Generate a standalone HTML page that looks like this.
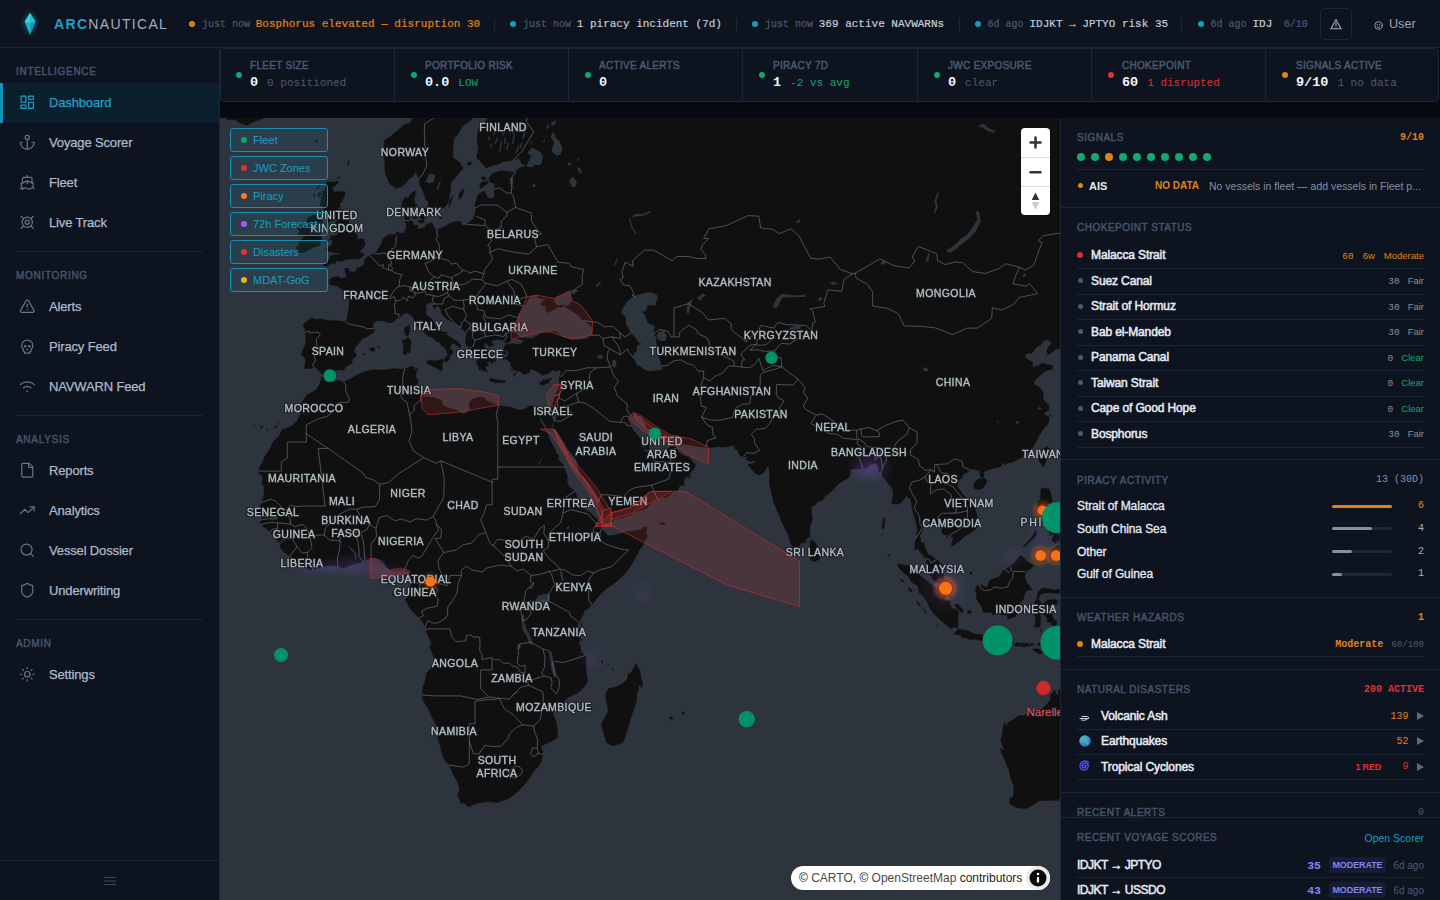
<!DOCTYPE html>
<html lang="en"><head><meta charset="utf-8"><title>ArcNautical — Dashboard</title>
<style>
*{box-sizing:border-box;margin:0;padding:0}
html,body{width:1440px;height:900px;overflow:hidden;background:#070a11;font-family:"Liberation Sans",Arial,sans-serif;color:#e2e8f0;-webkit-font-smoothing:antialiased}
.mono{font-family:"Liberation Mono","DejaVu Sans Mono",monospace}
#app{position:relative;width:1440px;height:900px;overflow:hidden}
/* top bar */
#top{position:absolute;left:0;top:0;width:1440px;height:48px;background:#0d131f;border-bottom:1px solid #1a2536}
#logo{position:absolute;left:23px;top:12px;width:14px;height:24px}
#brand{position:absolute;left:54px;top:15px;font-size:14px;letter-spacing:1.33px;color:#a0afc3;font-weight:400;line-height:18px;white-space:nowrap}
#brand b{color:#1ea2c6;font-weight:700}
#ticker{position:absolute;left:189px;top:1px;width:1122px;height:47px;overflow:hidden;white-space:nowrap;font-size:11px;line-height:47px;color:#c9d3e0}
#ticker span{position:absolute;top:0;white-space:nowrap;-webkit-text-stroke:.2px}
.tdot{position:absolute;top:20px;width:6px;height:6px;border-radius:50%}
.tsep{position:absolute;top:17px;width:1px;height:13px;background:#1c2739}
.ago{color:#4c5a70}
#bell{position:absolute;left:1320px;top:8px;width:32px;height:32px;border:1px solid #1c2739;border-radius:5px}
#bell svg{position:absolute;left:9px;top:9px}
#user{position:absolute;left:1374px;top:15px;font-size:12.6px;line-height:18px;color:#97a6ba}
/* sidebar */
#side{position:absolute;left:0;top:48px;width:220px;height:852px;background:#0d131f;border-right:1px solid #1a2536}
.sec{position:absolute;left:16px;font-size:10px;letter-spacing:.7px;color:#46546a;font-weight:400;-webkit-text-stroke:.45px #46546a;line-height:12px}
.nav{position:absolute;left:0;width:219px;height:40px;font-size:13px;letter-spacing:-.15px;color:#aebaca;line-height:40px;-webkit-text-stroke:.25px #aebaca}
.nav svg{position:absolute;left:19px;top:10.5px;width:16.5px;height:16.5px;stroke:#66758b;fill:none;stroke-width:1.75;stroke-linecap:round;stroke-linejoin:round}
.nav span{position:absolute;left:49px;top:0}
.nav.on{background:#0c1f2e;border-left:3px solid #1594b8;color:#1ea2c6;-webkit-text-stroke:.25px #1ea2c6}
.nav.on svg{left:16px;stroke:#1ea2c6}
.nav.on span{left:46px}
.hr{position:absolute;left:16px;width:187px;height:1px;background:#1a2536}
#sfoot{position:absolute;left:0;top:812px;width:219px;height:40px;border-top:1px solid #1a2536}
/* kpi strip */
#kpi{position:absolute;left:220px;top:48px;width:1219px;height:54px;background:#0d131f;border:1px solid #1a2536;border-radius:4px}
.k{position:absolute;top:0;height:52px;border-left:1px solid #1a2536}
.k i{position:absolute;left:16px;top:23px;width:6px;height:6px;border-radius:50%}
.k em{position:absolute;left:30px;top:10.5px;font-style:normal;font-size:10px;letter-spacing:.3px;color:#4c5a70;font-weight:400;-webkit-text-stroke:.45px #4c5a70;line-height:12px;white-space:nowrap}
.k b{position:absolute;left:30px;top:26px;font-size:13.5px;line-height:16px;color:#f1f5f9;white-space:nowrap}
.k b small{font-size:11px;font-weight:400;color:#4c5a70;margin-left:9px}
/* map */
#map{position:absolute;left:220px;top:118px;width:840px;height:782px;overflow:hidden;background:#2c343c}
#map>svg{position:absolute;left:0;top:0}
.lg{position:absolute;left:10px;width:98px;height:24px;border:1px solid #1690b3;border-radius:3px;background:rgba(22,150,185,.12);font-size:11px;line-height:22px;color:#1d9cc0}
.lg i{position:absolute;left:10px;top:8px;width:6px;height:6px;border-radius:50%}
.lg span{position:absolute;left:22px;top:0}
#ctrl{position:absolute;left:801px;top:10px;width:29px;height:87px;background:#fff;border-radius:4px;box-shadow:0 0 0 2px rgba(0,0,0,.1)}
#ctrl div{position:absolute;left:0;width:29px;height:29px}
#attr{position:absolute;left:571px;top:748px;width:259px;height:24px;border-radius:12px;background:#fff;font-size:12px;line-height:24px;color:#222}
/* right panel */
#panel{position:absolute;left:1060px;top:118px;width:380px;height:782px;background:#0d131f;border-left:1px solid #1a2536;overflow:hidden}
.ps{position:absolute;left:0;width:379px;border-bottom:1px solid #1a2536}
.ph{position:absolute;left:16px;font-size:10px;letter-spacing:.5px;color:#46546a;font-weight:400;-webkit-text-stroke:.45px #46546a;line-height:12px;white-space:nowrap}
.pr{position:absolute;right:16px;font-size:10px;line-height:12px;white-space:nowrap}
.row{position:absolute;left:16px;width:347px;border-bottom:1px solid #1a2536}
.row .d{position:absolute;left:1px;width:6px;height:6px;border-radius:50%}
.row .n{position:absolute;left:14px;font-size:12px;color:#e6ebf2;font-weight:700;white-space:nowrap;letter-spacing:-.2px}
.row .r{position:absolute;right:0;font-size:10px;white-space:nowrap}
</style></head><body><div id="app">
<div id="top">
<svg id="logo" viewBox="0 0 14 24" style="overflow:visible;filter:drop-shadow(0 0 3px rgba(34,200,230,.55))"><path d="M7.1 1L12.400 9.500L7.100 22.600L1.750 9.500Z" fill="#1fb4cc"/><path d="M7.100 1L7.100 11.200L1.750 9.500Z" fill="#3ad3e2"/><path d="M7.100 1L12.400 9.500L7.100 11.200Z" fill="#25bdd3"/><path d="M1.750 9.500L7.100 11.200L7.100 22.600Z" fill="#22b6cf"/><path d="M12.400 9.500L7.100 11.200L7.100 22.600Z" fill="#1796b6"/></svg>
<div id="brand"><b>ARC</b>NAUTICAL</div>
<div id="ticker" class="mono">
<i class="tdot" style="left:-0.25px;background:#e0831a"></i>
<span class="ago" style="left:13px;font-size:10px">just now</span>
<span style="left:66.75px;color:#e0831a">Bosphorus elevated — disruption 30</span>
<i class="tdot" style="left:321px;background:#1a9cc2"></i>
<span class="ago" style="left:334px;font-size:10px">just now</span>
<span style="left:387.75px;color:#c3cedb">1 piracy incident (7d)</span>
<i class="tdot" style="left:563px;background:#1a9cc2"></i>
<span class="ago" style="left:576px;font-size:10px">just now</span>
<span style="left:629.75px;color:#c3cedb">369 active NAVWARNs</span>
<i class="tdot" style="left:786px;background:#1a9cc2"></i>
<span class="ago" style="left:798.5px;font-size:10px">6d ago</span>
<span style="left:840.5px;color:#c3cedb">IDJKT → JPTYO risk 35</span>
<i class="tdot" style="left:1009px;background:#1a9cc2"></i>
<span class="ago" style="left:1021.5px;font-size:10px">6d ago</span>
<span style="left:1063.5px;color:#c3cedb">IDJ</span>
<i class="tsep" style="left:304.75px"></i>
<i class="tsep" style="left:547.25px"></i>
<i class="tsep" style="left:769.5px"></i>
<i class="tsep" style="left:992.25px"></i>
<span class="ago" style="left:1094.75px;font-size:10px">6/10</span>
</div>
<div id="bell"><svg width="12" height="12" viewBox="0 0 24 24" fill="none" stroke="#9aa8bc" stroke-width="2.300" stroke-linejoin="miter"><path d="M12 3.500L22 21.500H2Z"/><path d="M12 10v5.500" stroke-width="2.600"/><path d="M12 17.500v1.800" stroke-width="2.600"/></svg></div>
<div id="user"><svg width="9" height="9" viewBox="0 0 24 24" fill="none" stroke="#97a6ba" stroke-width="2.6" stroke-linecap="round" style="position:absolute;left:0;top:6px"><circle cx="12" cy="12" r="10"/><path d="M8 15s1.5 2 4 2 4-2 4-2"/><path d="M9 9v1M15 9v1"/></svg><span style="position:absolute;left:15px;top:0">User</span></div>
</div>
<div id="side">
<div class="sec" style="top:17.5px">INTELLIGENCE</div>
<div class="nav on" style="top:35px"><svg viewBox="0 0 24 24"><rect width="7" height="9" x="3" y="3" rx=".4"/><rect width="7" height="5" x="14" y="3" rx=".4"/><rect width="7" height="9" x="14" y="12" rx=".4"/><rect width="7" height="5" x="3" y="16" rx=".4"/></svg><span>Dashboard</span></div>
<div class="nav" style="top:75px"><svg viewBox="0 0 24 24"><path d="M12 22V8"/><path d="M5 12H2a10 10 0 0 0 20 0h-3"/><circle cx="12" cy="5" r="3"/></svg><span>Voyage Scorer</span></div>
<div class="nav" style="top:115px"><svg viewBox="0 0 24 24"><path d="M2 21c.6.5 1.2 1 2.5 1 2.5 0 2.5-2 5-2 1.3 0 1.9.5 2.5 1 .6.5 1.2 1 2.5 1 2.5 0 2.5-2 5-2 1.3 0 1.9.5 2.5 1"/><path d="M19.38 20A11.6 11.6 0 0 0 21 14l-9-4-9 4c0 2.9.94 5.34 2.81 7.76"/><path d="M19 13V7a2 2 0 0 0-2-2H7a2 2 0 0 0-2 2v6"/><path d="M12 10v4"/><path d="M12 2v3"/></svg><span>Fleet</span></div>
<div class="nav" style="top:155px"><svg viewBox="0 0 24 24"><circle cx="12" cy="12" r="7.5"/><circle cx="12" cy="12" r="3"/><path d="M3 3l3.6 3.6M21 3l-3.6 3.6M3 21l3.6-3.6M21 21l-3.6-3.6"/></svg><span>Live Track</span></div>
<div class="hr" style="top:203px"></div>
<div class="sec" style="top:221.5px">MONITORING</div>
<div class="nav" style="top:239px"><svg viewBox="0 0 24 24"><path d="m21.73 18-8-14a2 2 0 0 0-3.48 0l-8 14A2 2 0 0 0 4 21h16a2 2 0 0 0 1.73-3"/><path d="M12 9v4"/><path d="M12 17h.01"/></svg><span>Alerts</span></div>
<div class="nav" style="top:279px"><svg viewBox="0 0 24 24"><circle cx="9" cy="12" r="1"/><circle cx="15" cy="12" r="1"/><path d="M8 20v2h8v-2"/><path d="m12.5 17-.5-1-.5 1h1z"/><path d="M16 20a2 2 0 0 0 1.56-3.25 8 8 0 1 0-11.12 0A2 2 0 0 0 8 20"/></svg><span>Piracy Feed</span></div>
<div class="nav" style="top:319px"><svg viewBox="0 0 24 24"><path d="M12 19.500h.01" stroke-width="2.600"/><path d="M2 9.500a15 15 0 0 1 20 0"/><path d="M6.500 14.500a8 8 0 0 1 11 0"/></svg><span>NAVWARN Feed</span></div>
<div class="hr" style="top:367px"></div>
<div class="sec" style="top:385.5px">ANALYSIS</div>
<div class="nav" style="top:403px"><svg viewBox="0 0 24 24"><path d="M6 22a2 2 0 0 1-2-2V4a2 2 0 0 1 2-2h8a2.4 2.4 0 0 1 1.704.706l3.588 3.588A2.4 2.4 0 0 1 20 8v12a2 2 0 0 1-2 2z"/><path d="M14 2v5a1 1 0 0 0 1 1h5"/></svg><span>Reports</span></div>
<div class="nav" style="top:443px"><svg viewBox="0 0 24 24"><path d="M16 7h6v6"/><path d="m22 7-8.5 8.5-5-5L2 17"/></svg><span>Analytics</span></div>
<div class="nav" style="top:483px"><svg viewBox="0 0 24 24"><path d="m21 21-4.34-4.34"/><circle cx="11" cy="11" r="8"/></svg><span>Vessel Dossier</span></div>
<div class="nav" style="top:523px"><svg viewBox="0 0 24 24"><path d="M20 13c0 5-3.5 7.5-7.66 8.95a1 1 0 0 1-.67-.01C7.5 20.5 4 18 4 13V6a1 1 0 0 1 1-1c2 0 4.5-1.2 6.24-2.72a1.17 1.17 0 0 1 1.52 0C14.51 3.81 17 5 19 5a1 1 0 0 1 1 1z"/></svg><span>Underwriting</span></div>
<div class="hr" style="top:571px"></div>
<div class="sec" style="top:589.5px">ADMIN</div>
<div class="nav" style="top:607px"><svg viewBox="0 0 24 24"><circle cx="12" cy="12" r="4"/><path d="M12 2v2"/><path d="M12 20v2"/><path d="m4.93 4.93 1.41 1.41"/><path d="m17.66 17.66 1.41 1.41"/><path d="M2 12h2"/><path d="M20 12h2"/><path d="m6.34 17.66-1.41 1.41"/><path d="m19.07 4.93-1.41 1.41"/></svg><span>Settings</span></div>
<div id="sfoot"><svg width="14" height="14" viewBox="0 0 24 24" fill="none" stroke="#3c4a60" stroke-width="2" stroke-linecap="round" style="position:absolute;left:103px;top:13px"><path d="M3 6h18M3 12h18M3 18h18"/></svg></div>
</div>
<div id="kpi">
<div class="k" style="left:-1px;width:174px;border-left:none;"><i style="background:#10a870"></i><em>FLEET SIZE</em><b class="mono">0<small style="color:#4c5a70">0 positioned</small></b></div>
<div class="k" style="left:173px;width:174px;"><i style="background:#10a870"></i><em>PORTFOLIO RISK</em><b class="mono">0.0<small style="color:#10a870">LOW</small></b></div>
<div class="k" style="left:347px;width:174px;"><i style="background:#10a870"></i><em>ACTIVE ALERTS</em><b class="mono">0</b></div>
<div class="k" style="left:521px;width:175px;"><i style="background:#10a870"></i><em>PIRACY 7D</em><b class="mono">1<small style="color:#10a870">-2 vs avg</small></b></div>
<div class="k" style="left:696px;width:174px;"><i style="background:#10a870"></i><em>JWC EXPOSURE</em><b class="mono">0<small style="color:#4c5a70">clear</small></b></div>
<div class="k" style="left:870px;width:174px;"><i style="background:#e03030"></i><em>CHOKEPOINT</em><b class="mono">60<small style="color:#e03030">1 disrupted</small></b></div>
<div class="k" style="left:1044px;width:174px;"><i style="background:#e0831a"></i><em>SIGNALS ACTIVE</em><b class="mono">9/10<small style="color:#4c5a70">1 no data</small></b></div>
</div>
<div id="map"><svg width="840" height="782" viewBox="0 0 840 782">
<defs><radialGradient id="gp"><stop offset="0" stop-color="#8b5cf6" stop-opacity=".3"/><stop offset="1" stop-color="#8b5cf6" stop-opacity="0"/></radialGradient><radialGradient id="go"><stop offset="0" stop-color="#ff7a1e" stop-opacity=".9"/><stop offset=".32" stop-color="#e24a1c" stop-opacity=".6"/><stop offset=".5" stop-color="#a8382c" stop-opacity=".32"/><stop offset=".75" stop-color="#6a3a6a" stop-opacity=".12"/><stop offset="1" stop-color="#6a3a8a" stop-opacity="0"/></radialGradient><filter id="bl" x="-20%" y="-20%" width="140%" height="140%"><feGaussianBlur stdDeviation=".6"/></filter><filter id="bl2" x="-30%" y="-30%" width="160%" height="160%"><feGaussianBlur stdDeviation="1.6"/></filter><filter id="nf" x="0" y="0" width="100%" height="100%" filterUnits="userSpaceOnUse"><feOffset dx="0" dy="0"/></filter></defs>
<rect width="840" height="782" fill="#2d343d"/>
<g fill="#101010" stroke="#101010" stroke-width=".4" stroke-linejoin="round">
<path d="M102.0,259.0 105.4,258.3 108.8,262.5 113.4,263.1 119.1,262.5 124.2,263.8 132.1,259.7 136.1,257.6 143.0,254.0 152.6,251.9 164.6,251.9 174.8,250.5 179.9,251.2 184.5,250.8 191.9,248.3 194.2,249.0 193.6,251.9 198.1,249.8 195.9,254.7 195.9,259.0 198.7,263.1 197.0,266.6 193.0,269.4 193.0,272.1 196.4,273.5 198.7,276.2 204.4,278.9 210.7,278.9 216.3,280.3 221.5,282.3 223.2,287.7 230.0,290.4 236.8,292.3 243.6,296.3 249.9,292.3 249.3,284.3 252.8,281.0 259.0,278.9 264.1,279.6 267.5,283.0 272.1,285.0 278.9,287.7 290.3,289.0 300.0,292.3 305.7,290.4 308.5,288.4 312.5,287.7 316.5,288.4 319.3,289.7 320.7,298.6 319.6,300.9 321.6,305.5 323.9,309.0 326.4,312.3 327.8,316.1 328.7,319.3 330.7,323.4 334.1,329.7 337.5,336.9 339.2,337.2 338.1,341.6 344.1,347.8 345.5,353.9 347.2,357.5 347.2,363.6 348.6,368.1 352.3,371.4 355.2,373.2 358.0,381.5 360.0,387.5 362.0,390.4 365.4,391.6 369.9,393.9 374.5,398.6 378.8,402.7 381.9,405.6 381.9,408.8 378.5,411.2 381.0,410.9 383.0,412.3 387.6,417.5 391.6,417.5 400.1,415.8 405.8,413.8 409.8,413.2 415.5,412.6 420.6,411.5 424.3,408.8 427.3,409.5 426.3,413.5 426.5,417.0 428.0,417.5 425.1,423.0 422.3,428.2 419.2,432.0 416.0,438.6 411.5,446.9 405.8,454.6 399.0,461.4 393.6,465.7 385.9,471.1 377.6,479.3 372.2,486.7 368.2,490.4 364.3,492.7 363.7,495.5 361.1,500.4 358.0,506.1 356.3,512.1 356.9,514.1 359.1,516.1 360.3,521.3 359.1,524.7 360.3,528.5 361.4,534.5 364.3,536.2 366.0,538.6 365.7,542.6 366.2,551.6 366.5,557.8 367.7,561.3 367.4,563.9 363.7,569.6 358.0,574.9 352.6,577.0 346.0,580.9 342.9,585.1 338.1,589.9 333.8,592.6 332.7,596.5 335.2,600.8 336.4,605.7 337.5,611.8 337.5,617.1 336.9,619.9 332.4,622.7 325.0,626.2 321.6,627.8 321.0,630.3 322.7,632.5 322.7,636.0 321.3,643.4 318.2,648.5 312.2,655.4 308.8,661.3 303.7,667.3 297.7,673.7 294.3,676.4 288.6,680.5 281.5,682.9 276.9,684.6 268.7,683.6 261.6,684.6 255.0,686.0 249.3,688.9 245.1,686.0 242.8,684.6 240.6,685.7 240.2,682.5 237.4,676.4 239.1,673.7 239.7,670.3 237.1,663.0 232.8,655.7 231.4,651.5 229.1,647.2 224.9,642.1 221.7,634.7 220.0,627.4 218.0,619.9 218.0,611.5 218.0,610.0 214.9,604.5 211.8,599.0 207.8,589.9 202.7,582.1 202.4,577.0 202.7,571.9 203.0,568.4 204.7,564.8 206.7,554.9 211.8,549.6 213.8,544.9 214.4,541.5 213.8,538.8 211.2,532.2 209.5,528.7 211.8,525.3 210.1,522.1 208.7,518.7 205.8,512.4 205.0,509.0 203.0,504.7 198.7,499.5 196.1,496.7 190.2,491.0 187.9,486.4 185.3,481.3 188.5,479.0 189.3,475.1 190.2,471.6 191.0,466.8 191.9,460.5 190.2,456.8 189.6,454.6 186.2,452.3 182.8,451.4 176.2,452.3 170.3,452.8 166.3,448.3 164.3,444.8 161.2,441.4 154.9,440.6 149.2,441.1 142.4,442.3 141.2,444.3 134.4,445.7 128.4,448.3 123.6,450.3 118.5,448.3 112.8,447.4 106.0,448.0 100.9,449.1 95.2,451.1 91.8,452.6 88.3,451.1 84.1,448.8 78.4,443.7 74.1,441.4 70.1,438.0 64.4,434.5 62.2,432.2 60.2,428.8 59.9,425.3 57.6,423.0 52.5,417.3 50.2,414.4 46.8,410.9 42.3,407.4 40.3,405.9 40.6,401.6 41.1,400.1 40.3,397.2 38.3,394.5 36.0,392.8 38.3,391.3 41.7,385.1 43.4,379.2 44.5,372.6 43.4,367.8 41.7,364.8 43.1,360.0 39.4,354.5 38.6,356.3 39.1,350.2 42.8,343.4 44.8,338.5 50.2,330.4 53.1,323.4 58.8,318.3 62.2,311.6 70.7,308.7 77.5,302.2 80.7,295.7 79.2,294.0 79.8,288.4 82.9,283.0 87.2,276.6 92.3,274.2 96.6,271.4 99.7,265.9 100.6,263.1 101.7,259.0Z M105.1,256.5 110.5,252.6 115.6,252.6 121.6,251.5 123.6,252.3 126.5,248.3 131.6,245.8 132.7,240.8 136.7,237.9 133.9,232.7 135.6,228.7 140.4,223.4 142.7,220.4 148.1,218.2 153.8,214.3 154.3,211.3 152.9,208.2 153.2,205.1 156.6,202.7 161.7,202.7 166.0,203.5 169.4,205.1 173.4,203.9 177.1,200.4 179.9,199.6 183.9,195.6 186.5,194.8 191.6,197.6 194.2,201.6 195.3,206.3 199.0,210.5 202.7,212.8 205.2,215.5 207.2,217.8 212.6,219.7 215.2,222.3 217.2,224.2 219.5,223.8 220.9,226.8 222.6,228.7 224.9,228.7 226.6,233.5 227.7,236.8 225.7,239.0 224.6,241.9 224.9,243.7 227.2,243.7 229.7,240.4 230.0,237.5 233.1,235.3 232.8,233.1 229.4,230.5 231.7,225.7 234.0,225.3 238.0,228.3 240.0,230.1 240.8,227.5 238.0,223.8 231.4,220.0 226.0,216.6 227.7,214.3 222.6,214.3 219.2,212.0 216.3,210.1 214.4,205.1 212.4,201.2 207.0,197.6 205.5,194.5 206.7,190.4 205.2,187.6 210.1,184.4 213.8,184.8 212.9,188.4 214.4,191.3 216.9,187.6 220.3,190.0 222.0,196.4 226.0,200.4 229.1,202.0 234.5,205.5 238.5,208.6 241.1,210.5 244.2,212.8 245.9,214.7 246.2,218.9 245.4,224.2 246.2,226.4 249.3,229.8 250.8,232.4 253.6,236.4 255.6,240.4 257.3,240.8 258.7,241.1 255.9,243.7 256.7,245.8 258.7,248.7 259.0,251.9 260.4,251.9 261.3,250.5 263.0,254.0 263.8,252.3 265.3,253.3 267.5,254.4 266.7,251.9 265.8,249.4 265.3,246.5 267.3,248.3 269.2,247.3 267.5,245.5 266.4,244.0 269.5,243.3 270.1,244.0 272.4,245.8 272.4,242.6 275.2,243.7 275.5,242.2 273.2,238.6 268.7,236.0 265.8,236.0 266.4,233.5 268.1,234.6 267.5,232.7 264.7,229.4 264.1,226.8 265.8,224.2 268.1,226.8 268.7,229.0 270.4,227.5 271.8,229.0 272.1,226.4 274.1,227.5 271.0,223.8 274.4,221.9 278.4,221.6 282.9,222.3 283.8,224.2 287.7,224.2 284.6,228.3 284.3,229.0 283.8,232.4 287.5,232.4 288.3,235.7 287.7,238.6 289.7,240.0 285.7,238.6 285.2,241.1 288.0,242.6 290.6,244.4 290.6,248.0 292.6,249.0 290.9,250.5 294.8,250.5 291.4,252.6 296.3,251.9 295.4,253.3 301.1,253.0 301.4,255.1 304.2,256.1 307.1,255.4 309.1,255.1 310.2,251.5 313.6,251.9 317.6,253.7 322.4,257.2 328.7,255.4 332.4,251.9 336.4,253.3 339.2,252.3 341.2,253.3 340.1,257.2 338.9,261.1 339.8,265.2 339.2,268.3 337.5,272.1 335.8,276.6 334.7,279.6 333.2,284.7 331.3,288.4 327.8,290.7 323.9,291.3 319.3,290.0 320.7,298.6 321.6,300.9 323.9,304.5 326.7,309.7 330.4,312.9 331.3,311.3 331.8,308.1 332.7,304.8 334.4,301.2 333.8,304.8 333.2,308.7 332.4,311.3 335.8,311.3 338.7,315.5 342.9,322.5 347.2,330.1 352.0,336.0 354.6,339.1 357.4,344.1 358.3,352.0 360.8,357.5 364.8,360.3 369.1,366.3 372.2,372.0 376.2,376.8 377.6,379.8 379.0,383.3 378.5,386.9 379.9,392.2 381.6,401.0 382.7,404.8 387.0,405.1 391.6,403.9 395.5,400.7 401.8,400.1 409.8,396.9 415.2,393.7 421.1,391.9 427.1,389.8 432.5,383.9 437.6,381.2 443.3,379.2 446.7,379.5 450.2,376.5 452.4,373.8 457.0,373.2 459.8,367.8 464.4,367.2 463.8,363.3 464.7,359.4 468.4,358.7 470.6,354.5 473.5,352.0 475.8,345.9 474.0,345.3 468.9,339.1 464.4,337.9 458.4,334.1 456.1,329.4 455.8,326.6 456.7,321.8 454.7,323.4 453.9,325.3 450.2,328.8 445.0,333.8 440.5,336.0 434.8,335.4 430.2,336.6 427.4,334.7 427.1,332.9 429.1,330.4 429.1,324.7 427.1,323.1 424.8,326.6 424.6,331.6 422.8,328.5 420.9,326.0 421.1,321.2 418.0,317.7 415.5,314.5 413.2,312.6 411.5,308.7 409.2,304.2 408.6,302.5 406.9,302.2 409.2,300.9 408.6,298.3 411.8,298.6 414.0,296.0 415.5,295.3 417.7,298.0 420.9,298.0 424.8,305.1 427.4,311.6 431.7,312.3 434.8,314.8 439.3,318.0 445.0,320.3 447.9,320.6 451.9,319.0 455.8,316.7 459.3,317.4 460.4,322.2 461.5,325.3 464.4,326.3 470.1,326.9 474.6,327.9 480.6,328.5 485.4,329.7 490.0,329.7 496.8,328.8 503.3,329.1 508.8,328.2 513.9,327.2 515.0,331.3 517.9,332.2 519.6,337.2 523.5,339.1 527.0,337.9 525.8,341.3 530.1,343.7 534.9,342.8 535.5,344.7 532.1,345.6 528.7,346.2 527.8,347.4 531.5,351.1 535.8,355.7 539.5,356.9 543.7,354.5 546.3,350.5 548.3,347.1 549.1,351.1 549.4,354.5 550.0,358.7 549.4,366.0 550.3,369.6 552.6,379.2 553.7,385.1 555.4,388.1 557.1,392.2 559.4,398.1 561.4,403.3 564.2,409.4 566.5,412.9 569.3,420.4 571.3,426.5 573.3,429.1 576.7,431.2 580.1,427.1 580.4,425.3 585.0,424.2 586.7,424.2 584.7,422.5 589.8,418.4 589.8,415.5 589.8,408.8 592.4,402.1 591.5,393.9 591.2,389.2 595.8,386.3 597.2,384.2 603.8,381.5 603.5,379.5 609.4,375.0 614.0,371.1 618.5,365.7 624.0,362.4 628.8,359.4 630.5,355.1 630.5,352.0 633.3,351.1 636.8,350.8 641.9,350.8 647.6,349.6 650.4,346.5 652.1,346.5 655.0,344.7 657.8,347.1 658.9,352.7 660.6,356.3 664.1,360.3 667.8,364.8 672.3,370.5 673.4,375.6 671.5,385.1 676.0,386.6 680.6,385.1 683.4,381.8 686.8,377.4 688.5,379.8 690.8,382.1 691.9,389.5 693.6,396.6 696.5,405.9 697.3,410.9 696.2,420.2 694.8,426.8 694.8,432.5 696.5,430.8 698.2,431.4 701.6,435.7 704.7,440.0 706.4,442.6 706.4,446.6 707.9,453.4 709.0,456.3 711.6,458.3 712.1,460.8 714.7,463.1 717.2,464.8 720.9,467.1 724.4,470.1 727.2,469.6 728.9,469.1 726.4,463.4 724.1,460.8 723.5,455.7 724.1,451.7 722.4,446.9 717.2,442.0 714.7,440.6 711.6,438.0 707.9,436.3 706.2,431.7 704.4,428.8 704.2,424.8 700.8,424.8 699.9,417.3 702.2,413.2 703.3,409.7 704.2,405.4 704.7,402.4 706.2,399.8 709.9,400.1 709.3,403.3 709.6,404.8 711.8,404.8 716.1,405.9 719.2,408.0 721.2,411.2 722.1,414.9 724.4,416.7 728.3,417.0 730.0,417.8 733.5,420.2 731.8,424.2 731.5,428.2 734.6,427.1 737.2,424.5 740.3,422.5 742.6,420.2 744.8,418.1 750.5,414.9 755.6,411.2 756.8,409.1 756.8,407.1 758.2,403.3 757.1,398.3 755.6,393.4 755.1,390.4 751.4,384.5 748.5,381.8 744.8,378.6 742.3,376.2 740.9,373.2 737.2,369.0 738.0,362.7 742.0,359.7 743.1,356.3 746.5,355.1 750.0,352.0 753.4,350.8 756.2,352.3 759.6,352.3 759.6,355.7 760.8,359.4 763.6,359.4 763.9,353.9 767.0,352.3 772.4,350.5 777.3,349.6 781.5,348.1 781.8,344.4 785.2,347.1 788.1,344.7 791.8,344.4 799.5,340.7 803.4,337.9 807.4,333.8 810.8,331.0 813.7,328.5 816.0,324.1 817.9,319.6 820.5,315.8 823.1,311.6 827.3,306.8 829.0,303.5 829.0,298.9 825.6,297.0 823.3,296.3 825.6,294.0 829.0,292.3 829.0,287.0 826.2,285.0 823.3,281.0 823.3,275.5 819.9,269.4 814.2,266.3 814.0,263.8 815.7,261.8 819.4,257.9 820.5,257.2 823.1,254.4 827.3,252.3 832.7,251.2 832.7,248.0 830.7,246.9 826.2,246.5 822.5,244.7 817.7,248.0 813.7,249.0 812.0,246.9 813.1,244.7 809.7,242.6 805.4,239.7 805.4,236.4 808.6,235.3 812.0,234.9 816.0,229.4 820.5,227.2 823.1,223.4 825.6,221.9 829.0,221.9 831.3,224.9 829.0,228.3 826.8,232.4 827.6,236.8 825.1,237.9 830.7,235.3 835.3,231.6 842.7,229.4 852.4,228.7 886.5,205.9 932.0,147.9 932.0,-162.3 203.8,-162.3 203.8,-27.4 198.1,-7.0 195.9,-4.4 190.2,4.7 183.3,7.2 179.4,11.0 174.8,14.8 170.3,18.5 164.6,22.2 164.0,29.4 163.4,35.3 164.6,43.5 165.1,54.8 167.4,60.4 169.7,65.8 175.7,70.2 181.1,69.1 185.6,65.3 189.6,60.4 192.4,59.3 195.3,54.8 195.9,49.2 196.4,56.0 199.3,60.4 199.8,66.9 203.3,73.4 205.5,80.8 208.4,84.4 207.8,90.6 209.5,95.1 210.4,97.6 214.1,97.1 217.2,95.6 217.5,91.1 224.3,89.5 228.6,84.4 230.3,72.8 231.1,63.7 232.8,62.6 238.5,56.0 243.1,50.3 239.7,44.6 233.4,40.0 232.8,33.0 233.1,28.2 234.3,19.7 237.7,16.6 242.2,8.5 251.0,2.1 256.2,-9.7 261.9,-21.9 272.7,-24.6 280.1,-13.7 274.9,-9.7 267.0,1.5 262.4,8.5 258.4,11.0 257.0,21.5 258.4,30.6 257.3,35.3 256.7,40.0 260.7,43.5 266.1,50.3 269.2,48.6 277.5,46.4 283.5,43.5 288.6,42.9 294.8,41.8 298.8,40.0 301.7,45.8 307.4,48.6 300.5,49.2 294.8,54.3 286.3,53.2 281.2,52.6 276.4,54.3 272.4,55.4 269.2,59.8 269.5,63.7 274.9,65.8 274.1,71.8 274.4,78.1 272.7,80.8 268.1,80.2 264.1,72.8 258.2,76.6 255.0,85.9 255.6,94.1 252.8,101.6 248.8,104.6 246.5,107.0 241.7,107.5 240.8,103.6 235.4,103.6 229.4,105.5 224.0,109.0 216.6,111.9 214.1,109.5 211.8,104.6 206.7,106.5 204.4,109.5 197.6,111.4 197.6,107.5 193.3,107.0 192.2,103.1 189.3,103.1 189.6,96.1 193.6,89.5 197.6,87.0 194.2,84.9 194.2,80.8 195.6,76.0 195.9,72.8 192.2,74.4 188.5,79.2 184.5,79.7 182.2,83.9 181.6,91.1 182.2,95.6 184.8,98.1 184.5,102.1 186.2,106.0 186.2,110.9 185.1,112.4 184.2,115.2 181.6,115.2 176.5,113.8 175.4,117.1 170.8,116.2 166.3,118.1 162.6,120.9 161.4,125.6 158.9,129.8 155.5,134.9 152.1,136.7 148.9,138.5 146.1,139.4 144.7,141.7 144.4,146.1 141.8,148.3 136.7,150.5 136.1,152.7 133.9,154.0 129.3,153.6 128.4,150.5 124.5,150.5 126.5,158.0 127.0,159.7 124.2,159.7 120.2,160.5 118.5,158.4 112.8,159.3 108.5,162.3 111.1,163.5 108.8,164.8 110.8,166.9 116.5,167.8 121.3,171.2 123.0,171.6 125.3,177.8 129.0,180.7 129.3,185.6 128.4,192.9 126.7,202.0 124.2,203.5 118.5,203.1 113.9,202.4 108.8,202.7 103.4,201.6 102.3,200.8 95.5,201.6 91.8,199.6 87.8,202.7 82.9,206.6 85.2,212.0 85.2,215.9 86.1,220.0 85.8,223.8 84.9,227.5 82.1,233.5 81.5,237.5 83.2,238.2 84.9,239.7 85.5,243.3 84.4,250.5 90.6,250.5 96.0,249.0 99.7,254.0 103.7,257.6Z M103.1,147.5 106.0,148.3 112.0,144.8 114.8,146.1 116.2,142.6 121.6,143.5 124.8,141.7 129.3,141.2 134.7,140.8 137.0,141.2 141.0,139.9 143.2,137.6 143.5,135.3 139.5,134.4 140.7,132.1 143.2,130.3 145.5,125.2 143.0,120.9 138.4,120.9 136.7,121.9 137.6,119.0 136.1,114.8 134.4,109.9 132.1,106.0 128.7,104.1 127.6,101.1 126.5,96.1 124.2,93.6 121.3,91.1 117.4,91.1 120.8,88.0 119.1,86.5 121.6,83.9 123.9,79.2 125.3,75.5 124.2,73.4 116.8,73.4 111.7,75.5 113.9,71.8 111.7,70.2 117.9,65.3 118.2,63.1 115.6,63.7 110.5,64.2 107.1,63.7 105.1,71.2 102.6,73.4 103.1,77.6 99.7,75.5 99.2,79.7 102.3,80.8 100.3,83.4 103.7,85.9 100.3,87.5 104.3,89.0 103.7,92.1 102.8,98.1 105.4,96.1 107.1,92.1 108.3,91.6 109.1,96.6 106.5,102.6 108.0,104.6 110.8,103.1 115.6,101.6 117.9,101.6 115.1,106.0 117.4,109.9 119.3,109.9 118.2,112.8 118.2,116.2 115.6,117.6 111.7,118.1 109.4,117.6 111.1,119.5 108.5,122.4 112.2,121.4 112.2,126.1 108.8,128.9 105.4,130.7 106.5,132.6 111.7,134.0 114.5,134.9 117.6,134.9 120.2,133.5 118.5,136.7 112.2,137.1 110.0,139.0 109.7,140.8 106.5,144.3 104.3,146.1Z M93.5,97.1 100.6,99.1 103.1,104.6 104.3,107.5 99.7,110.9 100.9,117.1 101.4,120.9 99.4,128.0 95.7,128.4 88.9,131.7 84.9,134.0 79.8,134.9 77.5,133.5 76.4,130.7 76.1,128.9 79.5,127.0 79.0,124.7 82.1,120.9 84.4,119.0 80.9,117.6 77.5,116.7 79.8,112.8 77.5,110.9 78.7,108.0 83.2,108.0 86.9,108.0 88.9,105.1 85.8,104.6 88.3,99.6Z M-3.8,-20.5 10.4,-4.4 6.4,2.1 15.0,1.5 20.1,5.3 27.5,7.2 34.3,3.4 43.4,0.2 50.2,-4.4 53.1,-8.4 58.2,-13.7 55.9,-27.4 -1.0,-34.5Z M415.9,545.8 418.9,550.8 420.0,554.0 420.9,559.2 422.8,565.4 421.4,569.3 418.3,566.3 418.6,570.4 416.6,576.7 416.6,582.4 413.2,592.9 410.6,601.1 407.8,610.6 405.2,618.7 402.9,624.6 399.0,625.9 392.4,628.1 386.4,624.3 383.9,615.6 381.6,607.5 382.2,604.1 385.3,599.0 388.1,593.5 387.6,587.5 385.9,581.8 385.9,575.5 388.4,570.7 393.3,569.6 399.0,567.8 403.5,564.8 407.2,561.6 408.1,556.0 411.5,554.6 413.2,551.3Z M591.2,421.2 595.2,424.5 597.5,428.5 600.3,433.4 601.2,438.3 598.6,441.7 594.1,443.6 591.2,442.6 589.8,437.7 589.2,431.7 590.4,426.2 590.4,422.5Z M677.7,445.7 683.4,447.1 688.2,447.7 693.1,451.7 697.1,455.7 703.6,460.3 706.7,463.1 709.0,464.8 712.7,467.7 717.0,470.5 722.1,474.5 726.1,477.3 724.4,481.9 729.5,483.3 730.6,488.1 732.3,490.4 736.3,491.0 738.9,494.4 737.7,498.4 738.0,503.5 737.7,510.4 734.6,508.7 730.6,510.7 726.9,507.0 720.9,502.4 717.2,499.0 710.7,491.8 706.4,482.7 703.0,477.9 699.3,475.1 697.6,467.4 691.9,464.5 688.5,458.8 682.3,453.7 678.3,448.8Z M734.0,515.8 738.6,511.0 743.1,512.1 748.3,512.7 753.1,515.5 756.5,516.4 763.6,517.0 765.0,514.1 767.3,514.1 769.0,515.5 773.0,516.7 777.0,518.1 777.8,516.7 783.5,516.7 784.7,517.5 778.4,518.7 777.8,520.7 779.5,521.6 784.1,521.3 786.4,521.8 786.4,524.1 786.9,527.3 782.4,525.9 776.7,525.3 769.9,524.7 763.0,523.0 755.6,521.3 750.0,521.6 745.4,520.1 740.9,519.3 741.4,517.3 735.7,516.4Z M786.7,523.9 790.9,523.3 793.8,525.3 790.9,527.6 787.5,525.3Z M794.6,527.0 795.8,525.0 799.5,524.7 798.9,528.2 794.9,527.9Z M799.7,525.3 804.6,525.3 808.0,525.0 808.6,527.0 812.5,524.7 813.7,526.7 809.1,528.2 802.3,529.0 800.0,528.2Z M817.4,525.6 822.8,524.7 829.6,525.6 834.7,524.1 835.3,525.3 830.7,527.3 825.6,528.2 818.2,527.6Z M812.5,531.3 817.9,530.5 822.8,534.2 819.9,536.2 814.8,533.4Z M838.1,536.5 841.6,531.0 847.2,526.7 858.0,525.0 859.8,525.6 855.2,528.7 846.7,533.9 841.0,536.2Z M759.3,465.7 763.3,467.9 767.0,469.4 768.2,465.4 769.9,462.5 773.3,460.8 778.7,459.1 783.8,452.3 789.2,448.8 792.1,446.9 795.8,443.4 799.7,438.0 802.3,438.0 804.6,440.8 807.4,444.0 814.0,447.7 810.3,451.1 806.3,453.1 804.6,458.5 806.8,464.8 812.3,471.6 806.3,472.8 804.3,476.8 803.7,480.7 800.3,484.4 798.3,489.8 797.2,494.4 795.5,498.4 787.8,501.0 787.2,496.7 782.4,497.0 778.4,495.5 772.7,496.7 771.9,494.4 767.0,494.4 763.0,494.1 761.3,487.9 756.5,481.3 756.8,477.3 755.4,472.2 755.6,469.6Z M814.8,509.0 815.4,503.5 816.0,500.1 812.0,492.7 814.2,484.7 816.8,481.0 817.4,476.8 818.8,473.1 822.8,469.9 829.6,471.1 835.3,471.9 842.7,470.8 845.8,467.7 847.8,469.4 843.3,474.8 837.0,475.3 829.6,474.8 823.3,475.1 819.6,477.3 818.5,481.6 821.6,485.3 824.5,485.3 827.3,482.2 834.2,481.6 837.9,482.2 834.2,485.9 829.0,488.1 825.9,488.4 830.7,493.8 831.9,496.7 833.0,499.8 834.7,502.4 830.2,504.7 827.3,503.5 827.3,500.4 823.6,496.1 824.5,492.4 819.9,493.8 820.5,499.0 820.5,503.2 820.2,508.7 817.7,509.2Z M802.3,429.4 806.8,424.8 812.5,417.8 815.7,412.0 816.5,417.3 811.4,422.5 806.3,427.6Z M821.4,369.9 829.0,371.1 831.3,377.4 832.4,383.3 827.3,386.9 827.3,393.4 830.7,397.2 835.3,398.1 840.4,398.1 841.6,405.4 837.0,402.7 833.0,401.6 828.2,397.5 821.6,398.1 823.3,393.4 818.8,392.2 817.1,383.9 820.5,381.5 820.5,375.6Z M820.2,400.4 825.1,400.1 827.0,404.5 825.1,407.4 821.6,403.3Z M829.0,409.1 835.9,411.2 834.7,415.5 829.6,417.5 829.0,413.2Z M832.4,420.2 835.3,414.7 838.4,414.9 836.4,421.9 835.9,425.6 832.4,423.0Z M837.0,422.7 838.7,417.8 841.3,412.9 841.0,417.8 838.7,422.5Z M829.0,437.7 831.3,431.7 837.6,427.6 842.7,428.8 845.5,425.9 849.5,421.3 854.1,426.5 855.8,435.7 853.5,441.4 850.7,442.6 848.9,445.4 842.1,442.6 841.0,435.7 837.0,434.5 830.2,438.0Z M823.9,330.4 827.3,328.5 829.6,330.4 827.3,336.6 826.2,342.2 823.1,349.6 821.6,346.5 818.8,342.2 819.4,337.9 822.2,332.9Z M753.9,366.0 756.8,361.8 761.3,360.6 765.3,360.6 767.0,363.6 764.2,368.7 759.6,372.0 753.9,370.2Z M789.8,686.0 789.8,680.5 793.5,678.4 794.0,669.3 792.6,665.0 790.4,659.7 789.5,653.1 787.5,648.2 784.9,642.1 781.2,634.4 780.7,630.6 783.5,631.9 785.2,632.5 782.4,628.1 780.7,621.2 782.7,614.9 783.0,608.8 784.9,604.5 786.4,608.1 788.1,604.8 792.1,602.6 796.6,599.0 799.5,597.4 803.4,597.7 810.3,595.3 816.0,593.5 821.1,591.7 826.8,586.3 830.7,581.2 830.7,576.7 834.7,571.9 837.0,577.3 838.7,577.3 838.7,571.9 843.3,571.3 845.5,566.0 851.2,560.1 857.5,556.6 863.7,562.5 872.3,563.1 875.1,549.0 892.2,544.9 903.6,547.3 903.6,683.2 875.1,667.0 852.9,671.7 842.1,676.4 838.1,682.5 829.0,682.2 818.2,682.9 814.8,686.0 806.3,690.5 798.9,690.1 795.5,689.1Z M189.0,205.9 189.6,209.0 189.9,212.8 188.5,216.6 187.6,218.2 185.6,217.0 184.5,214.3 184.2,210.9 185.3,209.0 188.5,208.2Z M187.9,219.3 190.5,221.9 191.0,224.9 190.5,228.7 189.9,234.9 187.3,234.6 185.9,236.8 183.3,236.0 183.3,232.4 183.9,229.4 182.8,224.6 181.9,221.6 183.3,222.3 185.6,221.6Z M224.3,241.5 221.5,246.9 222.6,250.1 221.5,253.0 216.6,250.1 212.9,248.3 207.2,245.8 206.4,244.4 208.1,241.9 211.5,242.2 215.2,242.9 222.0,241.5Z M269.5,260.4 269.8,262.8 276.4,264.9 285.2,264.5 285.2,262.5 282.0,262.5 278.6,262.1 272.1,260.7Z M319.3,264.2 319.9,266.3 323.3,267.3 327.0,265.2 329.3,264.9 328.7,263.5 332.4,259.7 325.0,262.1 322.7,261.8 322.7,263.5Z M148.9,231.6 153.2,229.0 155.2,230.9 153.2,233.8 150.9,232.4Z M157.2,228.3 160.0,228.7 159.7,229.8 157.5,229.0Z M142.4,236.8 144.7,235.3 144.7,236.8 143.2,237.1Z M197.6,94.1 202.1,91.6 205.5,90.0 207.2,94.1 205.5,99.1 203.8,101.6 202.1,101.6 199.3,99.1Z M191.3,96.1 194.7,95.1 197.0,98.1 196.4,100.6 193.0,100.6Z M198.1,102.6 203.3,102.1 204.4,104.1 201.0,105.1 198.1,103.6Z M238.5,80.8 239.1,75.5 242.5,71.2 244.2,71.8 242.5,77.6 240.2,80.8Z M228.9,89.0 230.0,82.8 232.8,77.1 231.7,82.8 229.4,89.0Z M259.6,66.9 261.9,64.2 268.1,63.1 267.5,65.8 264.1,68.0 260.7,70.7Z M261.0,59.8 264.1,58.2 266.7,60.9 263.6,62.6Z M246.5,45.8 249.3,43.5 251.6,45.2 249.9,47.5Z M219.2,100.1 219.8,98.1 221.7,99.6 221.5,101.1Z M293.1,256.5 296.3,254.4 295.4,256.8 293.7,258.3Z M282.6,234.6 284.6,233.1 286.9,235.7 284.0,236.0Z M282.6,239.3 284.3,239.3 284.0,241.9 282.9,241.5Z M438.8,405.4 442.8,404.5 445.9,405.4 442.8,406.8Z M358.6,510.1 359.7,511.0 360.6,514.1 359.1,513.2Z M361.1,505.2 362.3,505.8 361.7,508.4 361.1,507.5Z M361.1,521.3 362.5,521.8 361.7,523.0Z M449.9,599.3 451.9,599.0 453.0,600.8 451.3,601.7 449.9,600.8Z M461.8,594.7 463.5,593.5 464.4,595.3 463.0,596.5 461.8,595.9Z M381.6,542.6 382.7,543.2 382.7,545.5 381.6,544.6Z M391.8,550.2 393.0,550.5 392.4,551.9Z M387.3,546.7 388.7,547.0 388.4,548.1Z M183.6,457.7 186.2,456.0 186.5,458.5 184.8,459.1Z M172.5,475.6 174.0,475.3 173.1,477.3Z M40.0,309.4 42.8,308.1 42.0,310.3Z M46.0,311.3 47.7,310.6 47.4,312.6Z M53.9,310.3 56.5,307.1 56.2,309.4Z M57.1,305.1 58.8,303.8 58.5,305.1Z M33.4,306.8 34.3,306.4 34.0,307.7Z M422.6,322.8 423.7,322.8 423.4,325.0Z M450.2,320.3 455.3,318.0 455.8,318.7 453.0,319.9Z M468.9,360.0 470.6,357.2 470.9,358.1 469.5,360.3Z M662.9,399.8 664.6,401.0 664.3,408.6 663.2,411.5 662.1,409.1 662.9,403.9Z M661.2,415.8 662.4,416.1 661.8,417.3Z M668.3,436.3 669.7,436.8 669.5,438.6 668.6,438.3Z M680.3,461.1 684.0,463.1 683.7,464.0 680.8,462.5Z M688.0,469.4 691.9,471.9 692.2,473.9 689.4,472.8Z M696.5,483.0 699.9,485.9 700.2,487.6 697.9,486.4Z M702.2,489.3 705.6,493.3 707.0,496.1 705.3,494.4Z M716.4,507.5 718.1,508.1 717.5,508.7Z M734.0,486.4 738.0,485.9 743.1,492.1 742.0,495.0 738.6,492.1 736.3,489.3Z M747.7,492.1 751.4,492.7 751.1,495.3 748.0,495.3Z M727.2,470.8 730.6,470.5 730.6,472.5 728.9,472.2Z M729.5,477.3 731.2,477.9 732.6,479.0 730.0,479.3Z M750.0,454.0 752.2,454.8 751.7,456.6 750.0,455.7Z M726.4,418.4 727.5,418.1 727.5,420.2 726.9,419.9Z M823.3,443.1 826.2,443.1 825.1,444.0Z M828.5,439.7 831.3,439.1 830.7,440.6Z M833.0,503.8 836.4,502.4 836.4,507.5 833.3,509.2 833.0,507.0Z M831.3,503.8 833.6,504.1 833.6,507.5 831.6,507.0Z M834.2,484.7 838.4,484.4 837.6,486.1 834.7,486.4Z M820.8,510.7 821.4,512.1 820.8,514.1Z M127.6,48.1 129.0,45.8 128.7,42.3Z M117.1,59.8 119.1,58.7 119.1,60.4Z M96.3,71.2 99.4,65.8 99.4,68.6Z M93.5,79.2 94.3,75.0 94.3,79.2Z M97.4,76.0 100.3,73.9 102.6,78.7 99.7,79.7Z M99.7,88.0 100.3,84.9 103.1,86.5 102.0,88.0Z M98.9,94.1 100.9,92.1 101.1,94.6Z M108.5,109.9 110.5,107.0 110.8,109.0Z M95.2,23.4 97.2,21.5 96.9,25.2Z M196.7,272.5 198.4,272.8 197.6,273.8Z M825.6,286.7 829.0,288.0 826.8,287.7Z M829.3,297.6 831.3,297.6 830.2,298.6Z"/>
</g>
<path fill="#2c343c" d="M279.3,33.6 280.8,33.6 281.9,22.8 280.5,22.8Z M295.2,35.3 296.7,35.3 299.6,27.0 298.1,27.0Z M299.2,30.6 300.7,30.6 303.0,24.6 301.5,24.6Z M291.8,25.8 293.3,25.8 295.0,16.0 293.5,16.0Z M286.1,31.8 287.6,31.8 288.8,24.6 287.3,24.6Z M270.2,30.6 271.7,30.6 272.3,25.8 270.8,25.8Z M274.8,25.8 276.2,25.8 278.0,19.7 276.5,19.7Z M282.2,17.2 283.6,17.2 284.8,11.0 283.3,11.0Z M292.4,16.0 293.9,16.0 295.0,9.8 293.5,9.8Z M302.1,20.9 303.6,20.9 306.4,9.8 304.9,9.8Z M304.9,12.3 306.4,12.3 308.1,7.2 306.6,7.2Z M287.9,12.3 289.3,12.3 291.0,7.2 289.6,7.2Z M273.1,17.2 274.5,17.2 275.7,12.3 274.2,12.3Z M288.4,-3.1 289.9,-3.1 293.9,-5.1 292.4,-5.1Z M298.1,14.8 299.6,14.8 300.7,8.5 299.2,8.5Z M283.9,25.8 285.3,25.8 286.2,19.7 284.7,19.7Z M267.9,22.2 269.4,22.2 270.3,18.5 268.8,18.5Z M325.6,9.8 329.0,6.6 329.6,8.5 326.7,11.0Z M330.7,5.9 334.7,2.1 336.4,4.7 332.4,7.9Z M347.2,46.4 349.5,44.1 351.5,45.8 349.5,48.1Z M356.9,42.9 358.6,39.4 359.7,42.3Z M356.9,50.3 359.7,49.2 362.0,54.8 360.3,55.4Z M311.9,68.0 314.2,65.3 315.9,68.0 313.6,69.6Z M300.0,-0.5 302.2,-3.1 302.8,-0.5Z M309.6,25.8 311.9,22.2 312.5,24.6Z M322.2,24.6 324.4,20.9 325.0,23.4Z M135.8,441.4 137.0,438.0 135.6,434.0 132.1,431.1 128.7,427.6 128.2,428.5 131.0,432.2 133.9,435.1 134.7,438.0 135.0,441.1Z M301.1,219.7 294.8,214.3 292.0,209.7 294.3,204.3 297.4,202.7 298.5,196.4 304.2,188.8 307.4,183.2 310.5,178.2 314.8,177.0 317.0,177.0 317.6,179.5 321.0,181.1 326.7,181.1 321.6,183.6 320.4,187.2 325.6,188.4 325.6,193.3 327.6,194.8 330.1,194.1 334.7,191.3 336.9,189.6 342.6,189.6 343.8,187.6 343.5,186.4 337.5,187.6 334.1,184.0 334.7,181.1 336.9,178.6 341.5,176.6 344.9,175.7 349.2,172.8 353.4,172.0 356.9,172.0 359.1,172.8 355.2,174.9 353.4,176.2 350.6,176.6 352.6,181.5 350.6,184.4 348.3,187.6 344.6,187.2 344.3,188.8 347.8,190.9 350.6,192.5 357.7,197.2 361.4,201.2 368.8,205.9 371.6,209.0 372.5,212.4 372.2,216.3 368.8,218.9 366.0,220.8 361.4,221.2 354.0,221.6 351.2,221.2 346.0,219.7 342.4,218.9 340.1,215.9 335.5,213.2 327.6,213.7 319.9,215.5 316.5,217.8 314.2,218.9 312.5,220.4 307.9,219.7 304.0,219.8Z M287.7,225.3 292.0,221.6 294.8,220.8 300.3,221.2 302.8,222.7 305.7,223.1 302.8,223.4 301.1,225.7 300.0,225.7 294.8,226.1 292.6,224.9 290.3,225.7 287.7,226.1Z M405.8,185.2 408.6,181.9 414.3,177.8 420.0,176.2 425.7,174.5 431.4,174.5 437.1,177.0 437.9,180.3 435.4,186.0 437.6,187.6 434.2,187.2 427.4,187.6 425.7,193.3 421.4,193.7 424.6,196.4 426.5,200.8 427.4,204.7 433.1,207.4 434.8,208.6 433.7,215.5 434.5,217.0 436.5,220.8 436.2,223.4 437.1,228.7 436.2,232.7 440.5,234.6 438.2,237.5 441.9,248.0 442.8,251.2 437.1,252.3 431.4,253.3 428.0,253.0 423.7,251.2 420.0,248.3 416.9,247.3 413.5,240.0 413.5,237.9 414.3,235.3 416.6,233.5 417.2,227.2 422.0,226.1 418.0,224.2 414.9,218.9 410.3,213.2 405.8,205.9 405.8,199.6 401.2,194.8 402.9,190.0 405.2,186.8Z M436.8,219.7 439.9,223.1 445.6,222.7 447.0,217.4 443.9,212.8 439.3,213.6 436.8,216.6Z M476.9,180.3 482.6,175.3 486.6,177.4 482.6,179.5 480.9,182.7Z M466.7,190.0 468.4,183.6 472.9,181.1 471.2,186.0 468.9,195.6 466.9,195.6Z M553.1,187.6 556.5,180.3 562.2,175.7 570.8,177.0 576.4,177.4 582.7,177.0 586.1,175.7 585.0,179.1 579.3,179.1 570.8,179.5 562.2,179.5 557.1,190.0 554.3,190.0Z M569.1,210.1 575.3,207.8 581.0,207.8 580.4,210.5 574.7,212.0 570.8,211.7Z M725.5,132.6 730.0,134.9 735.7,131.2 741.4,126.6 750.0,119.5 755.6,113.8 760.8,103.1 759.1,93.6 755.6,93.6 757.4,101.1 753.4,108.0 747.1,116.7 741.4,120.0 735.7,126.1 730.0,130.3Z M306.2,48.6 311.3,37.7 307.4,35.3 311.9,29.4 321.0,34.2 323.3,38.9 321.0,46.9 314.8,46.9 311.9,49.2Z M331.3,33.0 334.1,24.6 330.7,18.5 333.0,13.5 335.8,19.7 339.8,23.4 342.6,30.6 340.4,36.5 336.4,37.7Z M289.2,60.4 293.7,59.3 292.0,68.0 295.4,71.2 290.9,69.1Z M205.5,63.7 209.5,55.4 215.2,57.1 214.1,63.7 209.5,65.3Z M216.3,72.3 219.2,63.7 220.9,62.6 218.6,71.2Z M315.9,482.5 317.6,477.9 322.7,476.2 328.4,475.3 330.7,479.0 329.0,483.0 327.3,488.7 324.4,491.6 322.7,491.0 319.3,491.8 317.0,491.6 315.9,487.6Z M301.7,496.7 304.2,496.7 304.5,505.2 306.8,511.5 310.2,517.8 313.1,526.4 309.6,525.9 306.8,518.4 302.8,512.1 301.4,503.5Z M328.4,531.9 331.8,533.9 333.0,541.5 334.4,547.3 335.8,553.7 336.4,559.5 334.1,559.0 331.8,553.7 330.7,546.7 329.6,539.1Z M339.8,451.7 342.1,452.8 343.8,462.5 342.1,463.1 340.4,457.4Z M308.5,471.1 313.6,464.8 314.5,465.7 311.9,470.5Z M300.0,487.0 302.2,487.0 301.7,491.6 300.0,491.0Z M297.7,525.9 301.1,526.4 300.0,531.0 297.1,530.5Z M288.6,581.2 293.1,577.3 300.0,573.1 300.3,572.5 293.7,575.2Z M346.0,410.3 348.9,407.4 349.5,409.7 347.8,410.9Z M316.5,349.0 320.4,344.7 322.7,339.1 323.0,337.2 321.6,341.0 318.7,345.3Z M391.6,248.3 392.7,241.9 395.5,241.9 396.7,246.9 394.4,249.8Z M376.8,239.0 379.6,236.4 383.6,238.2 381.9,241.1 377.9,240.4Z M702.2,251.2 705.6,249.0 709.0,251.9 706.2,253.7Z M725.5,401.0 727.8,402.1 730.6,405.9 728.3,405.6Z M713.6,95.1 715.8,88.0 714.1,82.8 717.5,74.4 719.2,74.4 716.4,82.8 718.1,89.0 715.3,95.1Z M757.9,8.5 763.0,5.3 769.9,11.0 775.0,12.3 774.4,14.8 768.2,13.5 763.0,9.8Z M705.6,143.5 708.4,134.4 709.6,135.3 708.4,143.5Z M660.1,146.1 662.9,142.6 666.9,144.3 663.5,147.0Z M608.9,165.2 613.4,163.5 618.5,166.1 613.4,166.9Z M597.5,181.9 600.3,178.6 603.2,181.1 599.8,182.7Z M348.9,62.6 352.9,58.7 356.9,63.7 355.7,68.6 352.3,69.6Z M430.2,93.1 422.3,96.1 414.9,96.1 410.3,101.1 412.0,108.0 416.6,115.7 415.5,116.7 410.6,108.0 408.9,101.1 414.3,98.6 422.3,98.1 430.2,95.1Z M393.3,147.9 396.7,140.8 397.8,141.7 394.4,148.8Z M375.1,168.6 379.6,163.5 381.3,164.4 377.3,169.1Z M575.3,104.1 579.9,101.1 580.4,104.1 577.0,105.5Z M795.5,304.8 798.3,302.2 799.5,304.8 796.6,306.1Z M776.1,304.8 779.0,302.2 778.4,304.8Z M817.7,290.4 819.9,288.4 821.4,291.0 818.8,292.0Z M802.3,158.4 805.1,154.9 806.3,157.5 803.4,159.3Z"/>
<g fill="none" stroke="#62666a" stroke-width=".75" stroke-linejoin="round" stroke-linecap="round">
<path d="M85.2,214.6 88.9,212.8 89.8,215.1 94.6,214.3 98.0,214.0 100.3,216.6 96.3,221.2 96.9,226.4 95.7,230.9 92.9,231.3 95.7,235.3 94.0,239.7 95.7,241.9 92.9,246.5 93.5,249.0 M125.3,203.1 127.6,205.5 131.6,206.6 139.5,208.2 143.8,209.0 146.9,210.9 153.5,210.3 M150.1,138.0 153.2,140.8 159.5,147.9 163.2,146.6 162.9,149.7 168.6,151.9 171.7,152.7 175.4,154.9 182.2,156.9 179.9,161.0 178.8,168.6 175.4,170.7 170.3,178.6 169.7,180.7 174.2,178.6 175.7,182.7 174.2,188.8 175.4,192.5 174.8,195.2 179.4,196.8 178.2,199.6 M154.9,135.8 160.0,135.8 164.0,134.9 168.8,137.6 168.0,141.2 169.7,141.2 170.3,137.1 170.8,131.2 174.2,130.3 175.7,127.5 176.5,118.1 M169.7,141.2 171.7,144.8 170.3,147.0 172.5,149.7 171.7,152.7 M168.6,151.9 168.3,147.0 170.3,147.0 M184.5,102.1 189.3,103.1 M216.6,111.9 217.5,118.1 216.1,121.9 218.6,124.7 219.5,129.4 219.2,134.0 220.9,136.7 220.0,140.3 M220.0,140.3 216.9,139.0 209.5,143.9 205.0,145.2 206.7,148.8 207.8,153.2 214.1,158.8 M214.1,158.8 209.5,163.1 208.9,167.8 209.5,169.5 205.0,168.2 198.1,170.3 193.6,170.7 190.2,169.1 184.5,167.4 178.8,168.6 M190.2,169.1 189.9,172.8 195.0,174.5 195.0,177.4 193.0,179.9 188.5,178.2 186.8,183.2 183.6,179.1 180.5,182.3 175.7,182.7 M195.0,174.9 198.1,175.3 205.0,173.2 206.1,176.2 213.5,177.8 218.3,178.6 224.6,176.2 227.2,174.9 229.4,170.3 232.8,167.8 233.1,165.2 232.0,160.1 220.9,156.7 219.2,160.1 214.1,158.8 M220.0,140.3 225.4,141.7 228.3,142.1 231.7,146.1 236.3,145.2 242.8,152.3 238.5,156.2 233.4,158.0 232.0,160.1 M242.8,152.3 246.5,153.2 249.9,154.9 255.6,153.2 263.8,155.8 264.7,151.4 270.4,144.3 272.7,140.3 269.8,134.4 270.1,128.9 267.5,127.5 271.5,123.3 269.2,111.4 265.3,107.5 247.3,106.5 M265.3,107.5 264.7,101.6 256.7,98.6 M269.2,111.4 274.4,111.9 281.2,109.5 281.2,103.1 286.9,98.1 286.9,94.3 295.7,89.5 293.1,77.6 291.2,75.0 292.0,66.9 291.7,59.3 295.4,54.3 M255.3,90.0 260.7,87.0 277.2,87.0 286.9,94.3 M274.1,71.6 279.5,69.6 286.3,75.0 291.2,75.0 M295.7,89.5 311.3,95.1 311.6,103.1 316.5,110.4 321.6,116.2 314.2,118.6 316.5,128.9 309.1,136.2 301.7,135.3 290.3,133.5 277.8,130.7 269.8,134.4 M316.5,128.9 327.8,126.6 331.3,132.6 338.1,144.3 348.9,145.2 351.7,148.8 363.7,151.4 362.0,158.4 362.5,166.1 352.9,172.8 M261.6,161.8 265.8,165.2 277.2,167.8 286.9,163.1 292.0,161.4 301.1,166.1 305.9,175.3 306.8,178.6 300.3,181.1 296.0,186.4 304.0,188.0 M286.9,163.1 293.7,172.8 295.4,181.9 296.0,186.4 M263.8,155.8 261.6,161.8 252.2,161.0 248.8,164.0 242.5,166.9 233.1,165.2 M265.8,165.2 256.2,178.6 250.8,180.7 243.1,182.3 234.0,182.3 229.4,177.8 227.2,174.9 M229.4,177.8 224.3,180.3 222.6,186.0 212.9,186.0 M213.5,177.8 212.4,181.9 214.1,185.2 M243.1,182.3 244.2,187.6 243.6,191.3 232.3,188.4 225.2,191.7 227.7,197.2 235.7,206.3 240.5,209.7 M243.6,191.3 246.5,197.2 244.8,202.0 241.9,204.3 240.5,209.7 M250.8,180.7 257.3,188.4 257.3,191.7 263.6,192.5 264.7,196.4 263.0,199.6 266.4,204.3 263.0,211.3 257.9,211.7 252.8,214.3 M244.8,202.0 251.3,207.0 249.6,209.4 245.9,214.7 M249.6,209.4 252.8,214.3 252.2,218.9 255.0,222.3 253.3,227.9 249.3,230.9 M255.0,222.3 265.8,218.5 263.0,211.3 M265.8,218.5 274.9,217.0 284.0,218.5 285.5,215.9 286.9,218.9 283.8,223.1 M285.5,215.9 292.0,213.2 294.8,213.7 M264.7,196.4 266.4,199.6 280.6,200.8 289.2,196.8 298.3,200.0 M199.3,60.4 202.7,56.0 206.7,48.1 205.5,36.5 205.0,28.2 204.4,17.2 204.4,5.9 214.6,-0.5 215.8,-7.0 213.5,-13.7 M293.7,41.8 302.2,33.0 313.6,13.5 306.2,3.4 309.1,-4.4 304.0,-13.7 M371.9,217.4 379.0,217.0 382.7,220.4 384.2,227.9 390.4,230.9 388.1,233.1 387.0,240.4 390.4,249.0 376.8,249.8 367.1,249.8 356.3,252.6 346.0,252.6 343.8,255.8 341.2,258.6 340.1,257.9 M363.1,202.7 377.3,204.3 384.7,209.0 392.7,208.2 399.5,214.3 404.6,218.9 412.0,214.7 M399.5,214.3 400.7,220.4 391.6,218.9 382.7,220.4 M391.6,218.9 397.2,226.4 400.1,232.4 400.1,236.8 M390.4,230.9 400.1,236.8 407.5,230.9 408.6,233.8 413.7,240.0 M376.8,249.8 369.9,254.7 368.8,268.7 356.3,275.5 344.9,283.0 339.2,280.0 M340.1,267.0 342.9,268.0 343.8,270.1 339.5,275.5 339.2,276.2 335.2,277.6 M339.2,276.2 339.2,280.0 337.8,282.3 337.8,288.4 336.9,291.7 334.7,301.2 M330.4,289.7 334.1,301.6 M356.3,275.5 358.6,284.0 346.0,288.4 351.7,295.0 348.9,298.3 340.4,303.5 334.4,302.5 M358.6,284.0 365.4,285.3 374.5,291.0 389.9,303.5 399.5,304.2 400.4,304.2 405.5,304.8 406.9,307.7 410.9,307.7 M400.4,304.2 403.5,298.3 408.3,298.3 M390.4,249.0 393.8,257.6 398.4,263.1 394.4,269.4 397.2,277.6 407.5,286.3 406.9,291.7 408.6,295.0 411.8,298.6 M379.0,382.7 381.3,376.8 387.0,376.8 393.8,377.4 399.5,378.0 402.9,379.5 409.8,372.0 414.9,369.6 431.4,367.2 437.6,381.2 M431.4,367.2 448.4,361.2 452.1,349.0 449.6,344.7 434.8,343.1 429.1,336.0 M449.6,344.7 453.0,335.4 454.1,330.7 456.1,330.7 M454.7,323.7 455.3,326.3 M424.6,331.9 426.8,332.9 M442.2,248.0 447.3,247.6 454.1,242.6 461.0,241.9 467.8,245.8 472.9,246.9 478.6,253.3 483.7,253.0 483.7,260.0 480.0,269.4 482.0,274.5 480.0,278.6 481.7,288.4 486.6,289.0 481.7,299.3 487.1,307.1 492.8,309.7 492.8,316.1 495.7,319.9 487.4,322.5 486.0,329.1 M483.7,260.0 490.0,262.8 494.5,258.6 502.5,255.1 508.8,248.0 513.9,248.0 521.3,249.0 529.8,249.8 534.9,246.2 538.9,240.4 542.9,252.6 552.6,247.3 561.7,248.7 M513.9,248.0 514.2,243.3 500.8,236.4 490.5,228.7 487.7,220.4 477.5,215.1 476.9,212.0 468.9,207.4 462.1,212.0 459.5,214.7 459.8,218.9 454.0,218.9 451.0,218.9 448.2,213.6 439.9,211.3 433.9,215.5 M454.0,218.9 454.0,190.0 468.6,185.6 482.6,194.8 488.3,202.0 504.8,200.4 511.6,206.3 511.0,210.5 513.9,214.3 522.1,220.0 525.8,224.2 528.1,219.7 534.9,217.0 539.2,211.7 M521.3,249.0 522.4,241.9 524.7,241.9 520.7,236.0 525.2,232.0 529.8,227.2 536.6,226.4 537.2,221.2 543.5,217.4 539.2,211.7 M561.7,248.7 561.1,239.7 555.4,239.0 554.5,232.7 545.2,233.5 537.2,231.6 529.8,232.4 536.6,226.4 M537.2,227.2 543.5,227.2 547.4,225.7 551.4,222.3 543.5,217.4 M554.5,232.7 561.1,225.3 569.6,226.1 581.6,218.2 591.8,213.2 586.1,207.4 566.8,206.6 557.7,204.3 553.7,210.1 540.6,207.4 539.2,211.7 M591.8,213.2 592.7,205.1 595.2,204.3 592.9,193.3 590.1,190.9 604.9,188.4 603.8,185.6 607.7,172.0 622.0,173.2 623.7,161.8 632.5,155.8 M632.5,155.8 620.3,151.4 610.0,139.0 599.2,141.2 590.7,140.3 578.7,117.6 570.8,110.9 558.8,115.7 553.1,111.4 540.6,109.9 538.9,98.1 528.1,97.6 506.5,107.5 488.8,110.9 483.7,120.5 488.8,120.5 482.6,126.6 480.9,131.2 485.4,136.7 486.0,140.8 476.3,140.3 468.9,138.5 457.0,138.5 452.4,142.6 445.6,139.0 433.7,132.1 424.6,132.1 412.6,142.6 413.2,148.3 405.2,144.3 401.8,153.6 403.2,159.7 400.1,161.4 403.5,166.9 409.8,167.8 414.3,175.7 412.0,177.4 415.5,178.6 M632.5,155.8 635.0,155.2 645.9,149.2 660.1,140.8 673.7,147.5 689.1,150.1 694.8,143.0 692.2,139.0 698.2,128.4 717.0,135.8 717.5,142.6 725.5,146.6 735.2,143.9 742.6,144.8 752.8,153.6 765.3,155.4 779.0,150.5 785.8,145.7 799.5,149.2 M635.0,155.2 636.2,160.1 647.6,166.5 652.7,174.1 652.7,188.0 667.5,190.4 678.3,195.6 684.0,207.8 704.4,208.6 714.7,209.7 732.9,216.6 747.1,210.1 757.4,210.1 771.6,200.4 772.4,189.6 781.8,192.1 793.8,186.4 798.9,179.5 817.7,175.7 809.7,165.7 805.7,168.2 792.9,165.7 795.5,158.4 799.5,149.2 M799.5,149.2 805.7,151.9 813.7,147.0 818.8,133.0 822.2,124.7 818.2,122.4 823.9,117.6 838.7,115.2 850.1,120.0 M481.7,299.3 491.1,302.2 500.2,302.2 512.7,299.3 515.0,290.4 522.4,286.3 529.8,285.7 530.9,277.6 535.5,275.9 533.2,271.4 540.0,268.7 540.3,257.2 542.9,254.4 555.4,251.2 561.7,248.7 M561.7,248.7 567.3,253.3 578.2,261.1 573.0,267.0 556.5,266.6 556.3,276.9 558.5,280.0 564.2,283.0 560.0,288.7 559.7,291.3 556.0,297.0 553.1,298.6 550.3,304.8 545.2,310.6 536.1,311.3 531.2,316.4 534.6,320.6 534.4,324.7 539.5,332.6 533.8,335.4 526.7,334.7 523.5,338.2 M578.2,261.1 585.0,269.4 583.3,274.2 587.8,280.0 583.3,288.0 586.1,291.7 596.4,297.0 602.6,296.0 614.0,303.5 619.7,307.4 624.8,311.9 636.8,312.3 640.7,311.0 644.7,310.6 648.7,309.4 656.7,312.6 665.8,307.4 676.0,303.5 682.8,302.2 689.4,309.7 M596.4,297.0 591.2,304.8 591.0,305.8 597.5,309.0 609.4,315.5 617.4,316.4 623.7,320.3 636.8,321.5 636.8,312.3 M641.3,315.8 642.4,319.0 659.5,318.7 659.2,314.8 656.7,312.6 M640.7,311.0 641.3,315.8 M689.4,309.7 686.8,316.4 677.1,323.7 673.7,329.4 674.3,335.4 666.6,336.3 666.3,342.8 662.4,349.3 660.6,356.6 M638.7,320.9 643.9,324.1 646.7,328.5 661.2,330.4 660.1,335.1 654.4,336.3 655.5,341.6 658.4,339.1 660.6,338.5 662.4,349.3 M638.7,320.9 636.8,325.3 641.3,329.1 636.8,332.9 640.4,335.4 639.6,341.6 642.2,347.8 642.4,350.2 M689.4,309.7 697.1,314.2 697.1,324.7 690.5,331.9 690.5,336.9 698.2,341.6 699.9,348.1 705.6,352.3 711.0,351.7 705.0,359.0 M705.0,359.0 698.8,362.4 691.9,363.9 689.4,369.9 694.2,379.2 696.8,383.3 694.2,389.8 699.6,398.3 699.9,405.1 702.5,409.7 697.3,418.1 696.2,420.3 M705.0,359.0 707.6,364.2 711.3,364.2 710.1,375.9 716.4,372.0 723.8,370.8 731.5,376.8 731.5,382.7 736.3,388.6 736.0,394.5 734.0,395.1 721.5,395.4 717.8,399.5 720.9,410.6 M705.0,440.6 709.3,441.7 710.7,445.1 716.4,441.7 M711.0,351.7 714.4,354.2 714.7,346.2 716.7,346.5 721.5,355.1 727.8,355.4 732.6,360.6 726.6,365.4 734.0,369.6 741.7,379.5 747.7,389.8 747.4,392.8 738.6,394.8 734.0,395.1 M747.4,392.8 747.7,406.5 740.9,410.0 737.7,412.9 733.5,414.7 729.8,417.7 M716.7,346.5 726.9,345.9 734.9,340.7 742.6,343.7 742.6,349.0 750.0,351.7 M759.3,465.7 760.5,469.9 764.5,472.5 771.6,471.6 773.9,469.1 782.1,470.2 787.5,469.1 789.8,463.1 792.6,460.3 793.2,453.4 804.6,453.6 M784.7,451.1 788.6,454.6 791.5,452.3 790.4,449.1 M123.0,263.8 125.6,266.6 125.9,273.5 129.3,280.6 128.4,284.3 119.1,284.7 114.8,287.4 114.8,292.3 107.1,298.3 98.6,300.9 86.2,306.8 86.2,315.8 M86.2,315.8 86.2,324.1 67.3,324.1 67.3,340.0 61.0,344.4 61.6,353.1 39.1,353.1 M86.2,315.8 108.1,330.4 142.4,354.5 145.8,359.4 153.8,362.1 159.7,366.3 168.6,364.5 178.2,356.0 203.7,339.7 193.6,332.9 189.0,322.8 191.9,313.9 191.3,306.1 189.6,297.0 187.0,284.3 182.8,281.6 178.2,272.8 182.8,266.6 182.8,259.0 184.5,251.2 M108.1,330.4 98.2,330.4 104.3,382.1 105.1,388.1 82.7,388.1 74.7,388.6 70.1,387.2 65.9,392.5 59.9,387.5 55.9,383.3 50.2,381.2 41.7,384.5 M65.9,392.5 70.1,401.0 70.7,406.2 57.6,404.8 49.1,404.6 40.6,406.5 M40.0,399.2 47.4,398.1 57.1,399.5 57.1,401.0 47.4,400.7 40.0,402.1 M57.6,404.8 57.6,410.3 51.9,411.5 50.2,414.7 M70.7,406.2 74.7,408.6 82.7,406.2 87.8,412.0 90.0,419.0 92.0,429.4 87.5,434.3 82.1,435.1 77.0,428.8 75.3,425.6 71.8,420.2 64.4,421.0 59.9,425.6 M77.0,428.8 70.1,437.7 M87.5,434.3 87.8,440.8 93.2,444.0 92.6,452.3 M90.0,419.0 100.3,416.7 104.3,417.5 109.4,421.9 120.2,423.0 119.6,431.7 117.4,439.7 117.9,448.3 M120.2,423.0 119.6,414.4 134.7,413.8 137.8,423.0 139.0,430.5 139.0,438.6 142.4,442.6 M134.7,413.8 140.7,414.4 143.5,424.2 144.9,441.7 M140.7,414.4 146.9,411.8 149.2,406.8 156.0,410.3 156.6,418.4 151.2,425.9 150.9,440.8 M104.3,417.5 105.4,409.7 110.5,405.1 113.4,400.4 119.1,396.3 129.9,391.0 136.7,391.3 140.7,399.2 146.9,404.5 149.2,406.8 M136.7,391.3 143.0,389.2 155.5,388.6 159.5,381.5 159.7,366.3 M189.6,297.0 194.2,292.3 194.2,287.0 201.0,282.3 201.3,277.2 M203.7,339.7 216.3,345.3 220.9,342.8 272.1,364.2 272.1,361.2 277.8,361.2 277.8,349.0 277.8,303.5 276.1,297.0 278.6,287.4 M277.8,349.0 345.5,349.0 M220.9,342.8 224.3,361.2 223.7,379.8 212.9,398.6 206.7,402.1 196.4,400.7 190.2,403.9 181.6,401.0 174.8,402.7 166.8,397.5 158.9,399.8 156.0,410.3 M212.9,398.6 215.8,402.1 216.3,406.2 218.6,411.5 210.7,423.0 208.4,427.1 202.7,436.8 199.3,440.3 193.0,437.7 188.5,442.0 185.6,448.8 184.5,451.1 M216.3,406.2 221.5,411.5 220.9,420.2 215.2,420.4 223.7,434.5 236.3,432.0 243.1,426.8 251.6,425.1 259.0,416.7 265.8,414.7 261.9,404.5 260.7,401.6 264.1,395.7 266.4,386.9 272.1,386.9 272.1,364.2 M265.8,414.7 270.4,425.9 273.2,427.6 277.2,421.3 286.3,422.7 294.8,423.9 300.5,421.9 306.2,418.4 313.6,421.3 319.9,410.3 324.4,407.4 323.9,415.5 328.4,423.0 329.6,414.9 334.7,409.7 340.9,404.5 342.9,395.1 346.0,378.9 355.2,373.2 M342.9,395.1 351.2,391.6 358.0,393.4 367.7,396.0 376.8,405.9 380.8,404.5 M376.8,405.9 373.1,411.5 373.4,414.4 379.9,414.5 381.6,411.6 M379.9,414.5 380.2,422.5 385.9,426.2 402.9,431.7 408.6,431.7 391.6,448.8 380.2,451.7 373.9,454.8 367.7,453.1 360.3,457.7 352.3,456.8 345.5,452.3 340.1,451.1 336.4,446.6 329.0,440.3 323.3,432.8 328.4,429.4 328.4,423.0 M373.9,454.8 368.8,461.4 368.8,482.2 371.9,486.7 M340.1,451.1 331.3,453.4 328.7,453.4 331.5,456.8 334.7,466.5 331.8,471.1 328.4,476.8 328.4,483.0 349.5,494.4 350.0,497.3 358.6,504.0 M328.7,453.4 322.7,455.7 317.0,456.8 311.1,457.4 310.5,463.7 313.6,465.1 305.9,472.8 304.0,482.5 304.0,485.3 301.7,486.7 300.0,491.0 300.5,492.7 301.7,496.1 302.5,502.7 M304.0,485.3 309.1,483.3 328.4,483.0 M309.1,483.3 311.1,490.7 309.4,491.0 305.7,490.7 300.5,492.7 M309.4,491.0 311.1,495.8 306.2,501.8 302.8,502.7 M273.2,427.6 278.9,432.8 285.7,439.7 291.4,448.3 297.1,452.8 303.4,451.1 311.1,457.4 M291.4,448.3 280.6,447.1 274.4,448.3 265.8,450.3 263.0,454.0 252.8,452.3 245.9,448.3 241.1,452.8 241.4,457.4 230.0,457.4 227.7,464.8 M223.7,434.5 218.0,442.6 218.6,448.8 220.9,454.6 227.2,461.1 227.7,464.8 227.2,467.7 218.0,465.1 211.2,465.1 199.8,465.1 191.3,464.2 M199.8,465.1 199.8,471.6 191.3,471.6 M211.2,464.8 210.9,470.2 216.3,469.6 218.0,472.5 214.6,477.3 218.0,480.7 217.5,488.1 206.7,490.4 201.6,493.3 203.3,497.8 199.0,499.8 M241.4,457.4 238.5,464.2 236.8,475.6 232.3,483.0 227.7,489.3 227.7,496.1 226.0,499.8 222.0,502.4 217.5,505.0 211.8,505.0 210.1,503.5 208.4,502.4 206.1,505.8 205.0,510.1 M205.5,511.5 209.5,510.7 230.0,511.0 231.7,518.4 235.7,523.6 245.6,523.0 246.5,517.3 251.0,517.0 252.8,519.0 259.6,519.0 260.1,525.3 259.6,532.2 262.4,537.4 261.9,541.5 271.5,539.7 272.1,539.7 272.1,551.9 260.7,551.9 260.7,570.7 268.7,579.1 M202.4,577.0 214.9,577.9 240.5,577.9 257.3,581.5 268.7,579.1 279.2,580.3 M272.1,539.7 274.4,542.0 279.5,541.5 283.5,545.5 289.2,544.9 292.0,547.8 297.1,549.0 300.5,554.3 305.1,554.6 305.1,547.0 300.5,548.4 297.1,545.2 298.3,537.4 298.3,530.2 300.0,525.9 310.5,524.1 323.0,531.0 328.7,532.8 M334.4,543.5 343.2,544.4 351.7,542.0 365.4,537.4 M323.0,531.0 325.0,539.1 324.7,549.0 321.6,555.4 324.4,557.8 331.3,560.1 332.1,565.4 330.7,569.6 336.4,576.1 339.2,569.6 339.2,561.3 334.1,554.9 332.4,543.8 M324.4,557.8 307.4,563.4 308.5,567.2 300.0,569.6 289.2,581.2 279.2,580.3 M308.5,567.2 313.6,569.6 322.7,573.7 323.3,580.3 322.2,590.5 320.4,601.4 313.6,608.1 302.8,606.9 293.1,596.5 284.6,591.1 279.2,580.3 M279.2,580.3 274.9,581.5 268.1,581.5 255.0,583.3 255.0,605.7 249.3,605.7 249.3,622.7 253.3,635.7 259.0,636.0 264.7,627.4 273.8,628.7 281.2,628.1 288.6,619.9 289.2,615.9 296.6,609.4 302.8,606.9 M249.3,622.7 249.3,645.9 243.6,649.2 234.5,647.9 229.4,647.2 M313.6,608.1 315.0,614.9 317.6,621.2 317.3,630.3 318.2,635.7 313.6,638.9 310.8,635.7 312.5,630.0 317.3,630.3 M318.2,635.7 322.7,636.0 M289.2,653.8 294.8,647.9 300.0,649.2 302.8,653.1 301.1,656.4 296.0,660.3 291.4,658.3 289.2,653.8"/>
</g>
<g filter="url(#nf)">
<g font-family="Liberation Sans,Arial,sans-serif" font-size="10.5" fill="#16191c" text-anchor="middle" stroke="#16191c" stroke-width="2.4" stroke-opacity=".85" stroke-linejoin="round" letter-spacing=".4">
<text x="283" y="12.6">FINLAND</text>
<text x="185" y="37.6">NORWAY</text>
<text x="194" y="97.6">DENMARK</text>
<text x="117" y="100.6">UNITED</text>
<text x="117" y="113.6">KINGDOM</text>
<text x="293" y="119.6">BELARUS</text>
<text x="195" y="140.6">GERMANY</text>
<text x="313" y="155.6">UKRAINE</text>
<text x="216" y="171.6">AUSTRIA</text>
<text x="146" y="180.6">FRANCE</text>
<text x="275" y="185.6">ROMANIA</text>
<text x="208" y="211.6">ITALY</text>
<text x="280" y="212.6">BULGARIA</text>
<text x="108" y="236.6">SPAIN</text>
<text x="260" y="239.6">GREECE</text>
<text x="335" y="237.6">TURKEY</text>
<text x="357" y="270.6">SYRIA</text>
<text x="189" y="275.6">TUNISIA</text>
<text x="94" y="293.6">MOROCCO</text>
<text x="333" y="296.6">ISRAEL</text>
<text x="152" y="314.6">ALGERIA</text>
<text x="238" y="322.6">LIBYA</text>
<text x="301" y="325.6">EGYPT</text>
<text x="376" y="322.6">SAUDI</text>
<text x="376" y="336.6">ARABIA</text>
<text x="515" y="167.6">KAZAKHSTAN</text>
<text x="726" y="178.6">MONGOLIA</text>
<text x="561" y="220.6">KYRGYZSTAN</text>
<text x="473" y="236.6">TURKMENISTAN</text>
<text x="733" y="267.6">CHINA</text>
<text x="512" y="276.6">AFGHANISTAN</text>
<text x="446" y="283.6">IRAN</text>
<text x="541" y="299.6">PAKISTAN</text>
<text x="613" y="312.6">NEPAL</text>
<text x="649" y="337.6">BANGLADESH</text>
<text x="442" y="326.6">UNITED</text>
<text x="442" y="339.6">ARAB</text>
<text x="442" y="352.6">EMIRATES</text>
<text x="583" y="350.6">INDIA</text>
<text x="823" y="339.6">TAIWAN</text>
<text x="82" y="363.6">MAURITANIA</text>
<text x="723" y="364.6">LAOS</text>
<text x="188" y="378.6">NIGER</text>
<text x="122" y="386.6">MALI</text>
<text x="408" y="386.6">YEMEN</text>
<text x="351" y="388.6">ERITREA</text>
<text x="749" y="388.6">VIETNAM</text>
<text x="243" y="390.6">CHAD</text>
<text x="303" y="396.6">SUDAN</text>
<text x="53" y="397.6">SENEGAL</text>
<text x="126" y="405.6">BURKINA</text>
<text x="126" y="418.6">FASO</text>
<text x="732" y="408.6">CAMBODIA</text>
<text x="74" y="419.6">GUINEA</text>
<text x="355" y="422.6">ETHIOPIA</text>
<text x="181" y="426.6">NIGERIA</text>
<text x="304" y="429.6">SOUTH</text>
<text x="304" y="442.6">SUDAN</text>
<text x="595" y="437.6">SRI LANKA</text>
<text x="82" y="448.6">LIBERIA</text>
<text x="717" y="454.6">MALAYSIA</text>
<text x="196" y="464.6">EQUATORIAL</text>
<text x="195" y="477.6">GUINEA</text>
<text x="354" y="472.6">KENYA</text>
<text x="306" y="491.6">RWANDA</text>
<text x="806" y="494.6">INDONESIA</text>
<text x="339" y="517.6">TANZANIA</text>
<text x="235" y="548.6">ANGOLA</text>
<text x="292" y="563.6">ZAMBIA</text>
<text x="334" y="592.6">MOZAMBIQUE</text>
<text x="234" y="616.6">NAMIBIA</text>
<text x="277" y="645.6">SOUTH</text>
<text x="277" y="658.6">AFRICA</text>
<text x="800.5" y="407.6" text-anchor="start" letter-spacing="1.7">PHILIPPINES</text>
</g>
<g font-family="Liberation Sans,Arial,sans-serif" font-size="10.5" fill="#b3bfc3" text-anchor="middle" stroke="#b3bfc3" stroke-width=".35" letter-spacing=".4">
<text x="283" y="12.6">FINLAND</text>
<text x="185" y="37.6">NORWAY</text>
<text x="194" y="97.6">DENMARK</text>
<text x="117" y="100.6">UNITED</text>
<text x="117" y="113.6">KINGDOM</text>
<text x="293" y="119.6">BELARUS</text>
<text x="195" y="140.6">GERMANY</text>
<text x="313" y="155.6">UKRAINE</text>
<text x="216" y="171.6">AUSTRIA</text>
<text x="146" y="180.6">FRANCE</text>
<text x="275" y="185.6">ROMANIA</text>
<text x="208" y="211.6">ITALY</text>
<text x="280" y="212.6">BULGARIA</text>
<text x="108" y="236.6">SPAIN</text>
<text x="260" y="239.6">GREECE</text>
<text x="335" y="237.6">TURKEY</text>
<text x="357" y="270.6">SYRIA</text>
<text x="189" y="275.6">TUNISIA</text>
<text x="94" y="293.6">MOROCCO</text>
<text x="333" y="296.6">ISRAEL</text>
<text x="152" y="314.6">ALGERIA</text>
<text x="238" y="322.6">LIBYA</text>
<text x="301" y="325.6">EGYPT</text>
<text x="376" y="322.6">SAUDI</text>
<text x="376" y="336.6">ARABIA</text>
<text x="515" y="167.6">KAZAKHSTAN</text>
<text x="726" y="178.6">MONGOLIA</text>
<text x="561" y="220.6">KYRGYZSTAN</text>
<text x="473" y="236.6">TURKMENISTAN</text>
<text x="733" y="267.6">CHINA</text>
<text x="512" y="276.6">AFGHANISTAN</text>
<text x="446" y="283.6">IRAN</text>
<text x="541" y="299.6">PAKISTAN</text>
<text x="613" y="312.6">NEPAL</text>
<text x="649" y="337.6">BANGLADESH</text>
<text x="442" y="326.6">UNITED</text>
<text x="442" y="339.6">ARAB</text>
<text x="442" y="352.6">EMIRATES</text>
<text x="583" y="350.6">INDIA</text>
<text x="823" y="339.6">TAIWAN</text>
<text x="82" y="363.6">MAURITANIA</text>
<text x="723" y="364.6">LAOS</text>
<text x="188" y="378.6">NIGER</text>
<text x="122" y="386.6">MALI</text>
<text x="408" y="386.6">YEMEN</text>
<text x="351" y="388.6">ERITREA</text>
<text x="749" y="388.6">VIETNAM</text>
<text x="243" y="390.6">CHAD</text>
<text x="303" y="396.6">SUDAN</text>
<text x="53" y="397.6">SENEGAL</text>
<text x="126" y="405.6">BURKINA</text>
<text x="126" y="418.6">FASO</text>
<text x="732" y="408.6">CAMBODIA</text>
<text x="74" y="419.6">GUINEA</text>
<text x="355" y="422.6">ETHIOPIA</text>
<text x="181" y="426.6">NIGERIA</text>
<text x="304" y="429.6">SOUTH</text>
<text x="304" y="442.6">SUDAN</text>
<text x="595" y="437.6">SRI LANKA</text>
<text x="82" y="448.6">LIBERIA</text>
<text x="717" y="454.6">MALAYSIA</text>
<text x="196" y="464.6">EQUATORIAL</text>
<text x="195" y="477.6">GUINEA</text>
<text x="354" y="472.6">KENYA</text>
<text x="306" y="491.6">RWANDA</text>
<text x="806" y="494.6">INDONESIA</text>
<text x="339" y="517.6">TANZANIA</text>
<text x="235" y="548.6">ANGOLA</text>
<text x="292" y="563.6">ZAMBIA</text>
<text x="334" y="592.6">MOZAMBIQUE</text>
<text x="234" y="616.6">NAMIBIA</text>
<text x="277" y="645.6">SOUTH</text>
<text x="277" y="658.6">AFRICA</text>
<text x="800.5" y="407.6" text-anchor="start" letter-spacing="1.7">PHILIPPINES</text>
</g>
</g>
<ellipse cx="133" cy="448" rx="36" ry="13" fill="url(#gp)" opacity="0.67"/>
<ellipse cx="98" cy="450" rx="28" ry="10" fill="url(#gp)" opacity="0.53"/>
<ellipse cx="168" cy="455" rx="26" ry="10" fill="url(#gp)" opacity="0.53"/>
<ellipse cx="650" cy="350" rx="24" ry="17" fill="url(#gp)" opacity="1.00"/>
<ellipse cx="422" cy="475" rx="15" ry="15" fill="url(#gp)" opacity="0.33"/>
<ellipse cx="370" cy="540" rx="15" ry="15" fill="url(#gp)" opacity="0.33"/>
<ellipse cx="725" cy="470" rx="28" ry="28" fill="url(#gp)" opacity="0.53"/>
<ellipse cx="793" cy="439" rx="16" ry="16" fill="url(#gp)" opacity="0.33"/>
<ellipse cx="822" cy="422" rx="20" ry="26" fill="url(#gp)" opacity="0.40"/>
<g fill="#e84040" fill-opacity=".15" stroke="#c92c2c" stroke-opacity=".8" stroke-width=".8" stroke-linejoin="round">
<path d="M291.1,221.3 291.6,214.2 297.3,201.8 307.1,178.7 316.8,177.2 334.6,180.4 348.8,173.3 351.5,182.2 361.3,187.5 372.8,203.5 371.9,216.9 351.5,221.3 331.1,214.2 320.4,213.7 304.4,217.8Z"/>
<path d="M200.4,277.3 212.0,271.4 238.6,270.7 263.5,273.7 278.6,278.2 278.6,287.1 238.6,294.2 208.4,296.8 202.2,290.6Z"/>
<path d="M333.7,266.6 340.8,266.6 339.9,276.4 335.5,287.1 331.1,289.7 328.4,287.1 326.6,277.3Z"/>
<path d="M320.4,311.1 334.2,311.1 348.7,336.1 357.2,346.5 376.1,369.2 385.6,384.3 390.3,392.8 391.6,408.5 375.2,408.5 382.2,396.6 378.0,384.3 366.7,365.4 350.6,346.5 345.0,335.1 330.8,315.3Z"/>
<path d="M334.2,311.1 351.5,344.0 372.5,371.0 383.0,390.0 382.0,403.0 377.0,394.0 370.0,376.0 353.0,352.0 340.0,329.0Z"/>
<path d="M381.8,393.0 391.2,389.5 391.6,408.5 381.8,407.0Z"/>
<path d="M408.0,299.8 413.2,294.9 418.2,295.9 433.3,306.5 449.3,316.7 470.7,320.7 488.5,329.2 488.5,346.0 473.3,339.3 456.0,328.7 438.7,319.3 425.3,314.0 413.3,304.7Z"/>
<path d="M413.2,294.9 424.0,302.5 436.0,312.0 452.0,320.5 442.0,318.5 428.0,312.0 416.0,302.0Z"/>
<path d="M376.0,408.1 392.0,394.5 409.3,390.0 430.7,373.5 465.3,373.2 579.5,443.3 579.5,488.7 506.7,466.8 392.0,408.1Z"/>
<path d="M392.0,394.5 409.3,390.0 430.7,373.5 452.0,373.3 441.0,379.5 426.0,387.5 412.0,395.0 392.0,401.5Z"/>
<path d="M150.3,440.5 155.8,440.5 161.1,447.4 169.4,452.3 180.6,450.2 189.3,452.7 188.9,455.3 179.2,456.7 159.7,459.2 150.3,460.3Z"/>
</g>
<circle cx="725.6" cy="470.3" r="11.7" fill="#f97316" fill-opacity="0.34" filter="url(#bl2)"/>
<circle cx="725.6" cy="470.3" r="7.4" fill="none" stroke="#a02a3c" stroke-opacity="0.90" stroke-width="1.3" filter="url(#bl)"/>
<circle cx="725.6" cy="470.3" r="6.5" fill="#f97316" filter="url(#bl)"/>
<circle cx="822.4" cy="392.4" r="10.0" fill="#f97316" fill-opacity="0.24" filter="url(#bl2)"/>
<circle cx="822.4" cy="392.4" r="5.7" fill="none" stroke="#a02a3c" stroke-opacity="0.63" stroke-width="1.3" filter="url(#bl)"/>
<circle cx="822.4" cy="392.4" r="4.8" fill="#f97316" filter="url(#bl)"/>
<circle cx="820.6" cy="437.5" r="10.5" fill="#f97316" fill-opacity="0.24" filter="url(#bl2)"/>
<circle cx="820.6" cy="437.5" r="6.2" fill="none" stroke="#a02a3c" stroke-opacity="0.63" stroke-width="1.3" filter="url(#bl)"/>
<circle cx="820.6" cy="437.5" r="5.3" fill="#f97316" filter="url(#bl)"/>
<circle cx="836.0" cy="437.5" r="10.5" fill="#f97316" fill-opacity="0.24" filter="url(#bl2)"/>
<circle cx="836.0" cy="437.5" r="6.2" fill="none" stroke="#a02a3c" stroke-opacity="0.63" stroke-width="1.3" filter="url(#bl)"/>
<circle cx="836.0" cy="437.5" r="5.3" fill="#f97316" filter="url(#bl)"/>
<circle cx="210.4" cy="463.7" r="10.3" fill="#f97316" fill-opacity="0.12" filter="url(#bl2)"/>
<circle cx="210.4" cy="463.7" r="6.0" fill="none" stroke="#a02a3c" stroke-opacity="0.32" stroke-width="1.3" filter="url(#bl)"/>
<circle cx="210.4" cy="463.7" r="5.1" fill="#f97316" filter="url(#bl)"/>
<circle cx="109.8" cy="257.7" r="6.4" fill="#059669" fill-opacity=".96" filter="url(#bl)"/>
<circle cx="434.8" cy="315.6" r="6.2" fill="#059669" fill-opacity=".96" filter="url(#bl)"/>
<circle cx="551.5" cy="239.8" r="6.2" fill="#059669" fill-opacity=".96" filter="url(#bl)"/>
<circle cx="61.1" cy="537.0" r="7" fill="#059669" fill-opacity=".96" filter="url(#bl)"/>
<circle cx="526.7" cy="601.3" r="8.2" fill="#059669" fill-opacity=".96" filter="url(#bl)"/>
<circle cx="777.6" cy="522.4" r="15" fill="#059669" fill-opacity=".96" filter="url(#bl)"/>
<circle cx="837.4" cy="524.7" r="17" fill="#059669" fill-opacity=".96" filter="url(#bl)"/>
<circle cx="837.4" cy="399.7" r="15.5" fill="#059669" fill-opacity=".96" filter="url(#bl)"/>
<circle cx="823.5" cy="570" r="7.2" fill="#dc2626" fill-opacity=".92" filter="url(#bl)"/>
<text x="806.5" y="597.5" font-family="Liberation Sans,Arial,sans-serif" font-size="11.5" fill="#e25a5a" stroke="#1b1f22" stroke-width="1.2" paint-order="stroke">Narelle</text>
</svg>
<div class="lg" style="top:10px"><i style="background:#10a870"></i><span>Fleet</span></div>
<div class="lg" style="top:38px"><i style="background:#e03030"></i><span>JWC Zones</span></div>
<div class="lg" style="top:66px"><i style="background:#f0801a"></i><span>Piracy</span></div>
<div class="lg" style="top:94px"><i style="background:#a855f7"></i><span>72h Forecast</span></div>
<div class="lg" style="top:122px"><i style="background:#e03030"></i><span>Disasters</span></div>
<div class="lg" style="top:150px"><i style="background:#eab308"></i><span>MDAT-GoG</span></div>
<div id="ctrl"><svg width="29" height="87" viewBox="0 0 29 87" style="position:absolute;left:0;top:0"><path d="M0 29.500h29M0 58.500h29" stroke="#ddd" stroke-width="1"/><path d="M14.500 9.500v10M9.500 14.500h10M9.500 44.300h10" stroke="#333" stroke-width="2.500" stroke-linecap="round" fill="none"/><path d="M10.700 72l3.800-7.600 3.800 7.600z" fill="#333"/><path d="M10.700 74l3.800 7.600 3.800-7.600z" fill="#ccc"/></svg></div>
<div id="attr"><span style="position:absolute;left:8px;top:0;white-space:nowrap">© <span style="color:#4a4a4a">CARTO</span>, © <span style="color:#4a4a4a">OpenStreetMap</span> contributors</span><svg width="24" height="24" viewBox="0 0 24 24" style="position:absolute;right:0;top:0"><circle cx="12" cy="12" r="12" fill="#ececec"/><circle cx="12" cy="12" r="8.500" fill="#0a0a0a"/><path d="M12 11v5.500" stroke="#fff" stroke-width="2.200"/><circle cx="12" cy="8" r="1.300" fill="#fff"/></svg></div></div>
<div id="panel">
<div class="ph" style="top:14px">SIGNALS</div>
<div class="pr" style="top:13.5px;color:#e0831a;font-weight:700;font-family:Liberation Mono,monospace">9/10</div>
<i style="position:absolute;left:16.0px;top:35.0px;width:8px;height:8px;border-radius:50%;background:#10a870"></i>
<i style="position:absolute;left:30.0px;top:35.0px;width:8px;height:8px;border-radius:50%;background:#10a870"></i>
<i style="position:absolute;left:44.0px;top:35.0px;width:8px;height:8px;border-radius:50%;background:#e0831a"></i>
<i style="position:absolute;left:58.0px;top:35.0px;width:8px;height:8px;border-radius:50%;background:#10a870"></i>
<i style="position:absolute;left:72.0px;top:35.0px;width:8px;height:8px;border-radius:50%;background:#10a870"></i>
<i style="position:absolute;left:86.0px;top:35.0px;width:8px;height:8px;border-radius:50%;background:#10a870"></i>
<i style="position:absolute;left:100.0px;top:35.0px;width:8px;height:8px;border-radius:50%;background:#10a870"></i>
<i style="position:absolute;left:114.0px;top:35.0px;width:8px;height:8px;border-radius:50%;background:#10a870"></i>
<i style="position:absolute;left:128.0px;top:35.0px;width:8px;height:8px;border-radius:50%;background:#10a870"></i>
<i style="position:absolute;left:142.0px;top:35.0px;width:8px;height:8px;border-radius:50%;background:#10a870"></i>
<div style="position:absolute;left:16px;top:51px;width:347px;height:1px;background:#1a2536"></div>
<i style="position:absolute;left:16.5px;top:65.0px;width:5px;height:5px;border-radius:50%;background:#e0831a"></i>
<div style="position:absolute;left:28px;top:60.5px;line-height:14px;white-space:nowrap;font-size:11px;font-weight:700;color:#e6ebf2">AIS</div>
<div style="position:absolute;left:94px;top:60.5px;line-height:14px;white-space:nowrap;font-size:10px;font-weight:700;color:#e0831a">NO DATA</div>
<div style="position:absolute;left:148px;top:60.5px;line-height:14px;white-space:nowrap;font-size:10.5px;color:#8290a6">No vessels in fleet — add vessels in Fleet p...</div>
<div style="position:absolute;left:0;top:89px;width:380px;height:1px;background:#1a2536"></div>
<div class="ph" style="top:104.4px">CHOKEPOINT STATUS</div>
<i style="position:absolute;left:16.0px;top:134.4px;width:6px;height:6px;border-radius:50%;background:#e03030"></i>
<div style="position:absolute;left:30px;top:130.4px;line-height:14px;white-space:nowrap;font-size:12px;color:#e6ebf2;letter-spacing:-.12px;-webkit-text-stroke:.5px #e6ebf2">Malacca Strait</div>
<div style="position:absolute;right:16px;top:130.9px;line-height:14px;white-space:nowrap;font-size:9.5px;color:#e0831a"><span class="mono" style="margin-right:9px">60</span><span style="margin-right:9px">6w</span>Moderate</div>
<div style="position:absolute;left:16px;top:150px;width:347px;height:1px;background:#1a2536"></div>
<i style="position:absolute;left:16.5px;top:160.39999999999998px;width:5px;height:5px;border-radius:50%;background:#4c5a70"></i>
<div style="position:absolute;left:30px;top:155.89999999999998px;line-height:14px;white-space:nowrap;font-size:12px;color:#e6ebf2;letter-spacing:-.12px;-webkit-text-stroke:.5px #e6ebf2">Suez Canal</div>
<div style="position:absolute;right:16px;top:156.39999999999998px;line-height:14px;white-space:nowrap;font-size:9.5px"><span class="mono" style="color:#8290a6;margin-right:8px">30</span><span style="color:#8290a6">Fair</span></div>
<div style="position:absolute;left:16px;top:176px;width:347px;height:1px;background:#1a2536"></div>
<i style="position:absolute;left:16.5px;top:185.89999999999998px;width:5px;height:5px;border-radius:50%;background:#4c5a70"></i>
<div style="position:absolute;left:30px;top:181.39999999999998px;line-height:14px;white-space:nowrap;font-size:12px;color:#e6ebf2;letter-spacing:-.12px;-webkit-text-stroke:.5px #e6ebf2">Strait of Hormuz</div>
<div style="position:absolute;right:16px;top:181.89999999999998px;line-height:14px;white-space:nowrap;font-size:9.5px"><span class="mono" style="color:#8290a6;margin-right:8px">30</span><span style="color:#8290a6">Fair</span></div>
<div style="position:absolute;left:16px;top:201px;width:347px;height:1px;background:#1a2536"></div>
<i style="position:absolute;left:16.5px;top:211.39999999999998px;width:5px;height:5px;border-radius:50%;background:#4c5a70"></i>
<div style="position:absolute;left:30px;top:206.89999999999998px;line-height:14px;white-space:nowrap;font-size:12px;color:#e6ebf2;letter-spacing:-.12px;-webkit-text-stroke:.5px #e6ebf2">Bab el-Mandeb</div>
<div style="position:absolute;right:16px;top:207.39999999999998px;line-height:14px;white-space:nowrap;font-size:9.5px"><span class="mono" style="color:#8290a6;margin-right:8px">30</span><span style="color:#8290a6">Fair</span></div>
<div style="position:absolute;left:16px;top:227px;width:347px;height:1px;background:#1a2536"></div>
<i style="position:absolute;left:16.5px;top:236.89999999999998px;width:5px;height:5px;border-radius:50%;background:#4c5a70"></i>
<div style="position:absolute;left:30px;top:232.39999999999998px;line-height:14px;white-space:nowrap;font-size:12px;color:#e6ebf2;letter-spacing:-.12px;-webkit-text-stroke:.5px #e6ebf2">Panama Canal</div>
<div style="position:absolute;right:16px;top:232.89999999999998px;line-height:14px;white-space:nowrap;font-size:9.5px"><span class="mono" style="color:#8290a6;margin-right:8px">0</span><span style="color:#10a870">Clear</span></div>
<div style="position:absolute;left:16px;top:252px;width:347px;height:1px;background:#1a2536"></div>
<i style="position:absolute;left:16.5px;top:262.4px;width:5px;height:5px;border-radius:50%;background:#4c5a70"></i>
<div style="position:absolute;left:30px;top:257.9px;line-height:14px;white-space:nowrap;font-size:12px;color:#e6ebf2;letter-spacing:-.12px;-webkit-text-stroke:.5px #e6ebf2">Taiwan Strait</div>
<div style="position:absolute;right:16px;top:258.4px;line-height:14px;white-space:nowrap;font-size:9.5px"><span class="mono" style="color:#8290a6;margin-right:8px">0</span><span style="color:#10a870">Clear</span></div>
<div style="position:absolute;left:16px;top:278px;width:347px;height:1px;background:#1a2536"></div>
<i style="position:absolute;left:16.5px;top:287.9px;width:5px;height:5px;border-radius:50%;background:#4c5a70"></i>
<div style="position:absolute;left:30px;top:283.4px;line-height:14px;white-space:nowrap;font-size:12px;color:#e6ebf2;letter-spacing:-.12px;-webkit-text-stroke:.5px #e6ebf2">Cape of Good Hope</div>
<div style="position:absolute;right:16px;top:283.9px;line-height:14px;white-space:nowrap;font-size:9.5px"><span class="mono" style="color:#8290a6;margin-right:8px">0</span><span style="color:#10a870">Clear</span></div>
<div style="position:absolute;left:16px;top:303px;width:347px;height:1px;background:#1a2536"></div>
<i style="position:absolute;left:16.5px;top:313.4px;width:5px;height:5px;border-radius:50%;background:#4c5a70"></i>
<div style="position:absolute;left:30px;top:308.9px;line-height:14px;white-space:nowrap;font-size:12px;color:#e6ebf2;letter-spacing:-.12px;-webkit-text-stroke:.5px #e6ebf2">Bosphorus</div>
<div style="position:absolute;right:16px;top:309.4px;line-height:14px;white-space:nowrap;font-size:9.5px"><span class="mono" style="color:#8290a6;margin-right:8px">30</span><span style="color:#8290a6">Fair</span></div>
<div style="position:absolute;left:16px;top:329px;width:347px;height:1px;background:#1a2536"></div>
<div style="position:absolute;left:0;top:341px;width:380px;height:1px;background:#1a2536"></div>
<div class="ph" style="top:356.6px">PIRACY ACTIVITY</div>
<div class="pr" style="top:356.1px;color:#8290a6;font-family:Liberation Mono,monospace">13 (30D)</div>
<div style="position:absolute;left:16px;top:381.2px;line-height:14px;white-space:nowrap;font-size:12px;color:#e6ebf2;-webkit-text-stroke:.3px #e6ebf2;letter-spacing:-.1px">Strait of Malacca</div>
<div style="position:absolute;left:271px;top:386.7px;width:60px;height:3px;border-radius:2px;background:#1c2739"><div style="width:60px;height:3px;border-radius:2px;background:#e0831a"></div></div>
<div style="position:absolute;right:16px;top:381.2px;line-height:14px;white-space:nowrap;font-size:10px;color:#e0831a;font-family:Liberation Mono,monospace">6</div>
<div style="position:absolute;left:16px;top:403.85px;line-height:14px;white-space:nowrap;font-size:12px;color:#e6ebf2;-webkit-text-stroke:.3px #e6ebf2;letter-spacing:-.1px">South China Sea</div>
<div style="position:absolute;left:271px;top:409.35px;width:60px;height:3px;border-radius:2px;background:#1c2739"><div style="width:40px;height:3px;border-radius:2px;background:#8290a6"></div></div>
<div style="position:absolute;right:16px;top:403.85px;line-height:14px;white-space:nowrap;font-size:10px;color:#a3b0c2;font-family:Liberation Mono,monospace">4</div>
<div style="position:absolute;left:16px;top:426.5px;line-height:14px;white-space:nowrap;font-size:12px;color:#e6ebf2;-webkit-text-stroke:.3px #e6ebf2;letter-spacing:-.1px">Other</div>
<div style="position:absolute;left:271px;top:432.0px;width:60px;height:3px;border-radius:2px;background:#1c2739"><div style="width:20px;height:3px;border-radius:2px;background:#8290a6"></div></div>
<div style="position:absolute;right:16px;top:426.5px;line-height:14px;white-space:nowrap;font-size:10px;color:#a3b0c2;font-family:Liberation Mono,monospace">2</div>
<div style="position:absolute;left:16px;top:449.15px;line-height:14px;white-space:nowrap;font-size:12px;color:#e6ebf2;-webkit-text-stroke:.3px #e6ebf2;letter-spacing:-.1px">Gulf of Guinea</div>
<div style="position:absolute;left:271px;top:454.65px;width:60px;height:3px;border-radius:2px;background:#1c2739"><div style="width:10px;height:3px;border-radius:2px;background:#8290a6"></div></div>
<div style="position:absolute;right:16px;top:449.15px;line-height:14px;white-space:nowrap;font-size:10px;color:#a3b0c2;font-family:Liberation Mono,monospace">1</div>
<div style="position:absolute;left:0;top:479px;width:380px;height:1px;background:#1a2536"></div>
<div class="ph" style="top:494.4px">WEATHER HAZARDS</div>
<div class="pr" style="top:493.9px;color:#e0831a;font-weight:700;font-family:Liberation Mono,monospace">1</div>
<i style="position:absolute;left:16.0px;top:523.0px;width:6px;height:6px;border-radius:50%;background:#e0831a"></i>
<div style="position:absolute;left:30px;top:519.0px;line-height:14px;white-space:nowrap;font-size:12px;color:#e6ebf2;letter-spacing:-.12px;-webkit-text-stroke:.5px #e6ebf2">Malacca Strait</div>
<div style="position:absolute;right:16px;top:519.5px;line-height:14px;white-space:nowrap;font-family:Liberation Mono,monospace;font-size:9px"><span style="color:#e0831a;font-weight:700;font-size:10px;margin-right:3px">Moderate</span> <span style="color:#4c5a70;font-size:9px">60/100</span></div>
<div style="position:absolute;left:16px;top:538px;width:347px;height:1px;background:#1a2536"></div>
<div style="position:absolute;left:0;top:551px;width:380px;height:1px;background:#1a2536"></div>
<div class="ph" style="top:566.4px">NATURAL DISASTERS</div>
<div class="pr" style="top:565.9px;color:#e03030;font-weight:700;font-family:Liberation Mono,monospace">200 ACTIVE</div>
<svg width="12" height="8" viewBox="0 0 12 8" style="position:absolute;left:18px;top:595px"><path d="M1 5.5h8.5M3 3.5h5.5c1 0 1.6 1 .8 2M2.5 7c2 .6 4 .4 5.5-.6" stroke="#cfd6e0" stroke-width="1" fill="none" stroke-linecap="round"/></svg>
<div style="position:absolute;left:40px;top:591.3px;line-height:14px;white-space:nowrap;font-size:12px;color:#e6ebf2;letter-spacing:-.12px;-webkit-text-stroke:.5px #e6ebf2">Volcanic Ash</div>
<div style="position:absolute;right:31.5px;top:591.8px;line-height:14px;white-space:nowrap;font-size:10px;color:#e0831a;font-family:Liberation Mono,monospace">139</div>
<svg width="7" height="8" viewBox="0 0 7 8" style="position:absolute;left:356px;top:594.3px"><path d="M0 0L7 4L0 8Z" fill="#5b6a80"/></svg>
<div style="position:absolute;left:16px;top:611px;width:347px;height:1px;background:#1a2536"></div>
<svg width="12" height="12" viewBox="0 0 12 12" style="position:absolute;left:18px;top:617px"><defs><radialGradient id="gl" cx=".35" cy=".3" r=".8"><stop offset="0" stop-color="#5cc0f5"/><stop offset="1" stop-color="#1f5fd0"/></radialGradient></defs><circle cx="6" cy="6" r="5.8" fill="url(#gl)"/><path d="M3.2 1.6c1.2-.5 2.6-.2 3.2.6.5.8-.3 1.4-.9 2.1-.5.7.1 1.500-.7 2.100-.9.500-1.700-.300-2.100-1.300C2.100 4 2.300 2.400 3.200 1.600zM7.300 6.300c.900-.300 2 .100 2.300.900.200.900-.500 2-1.400 2.500-.800.300-1.300-.500-1.400-1.400-.100-.800-.100-1.700.500-2z" fill="#3fbf6a"/></svg>
<div style="position:absolute;left:40px;top:616.4px;line-height:14px;white-space:nowrap;font-size:12px;color:#e6ebf2;letter-spacing:-.12px;-webkit-text-stroke:.5px #e6ebf2">Earthquakes</div>
<div style="position:absolute;right:31.5px;top:616.9px;line-height:14px;white-space:nowrap;font-size:10px;color:#e0831a;font-family:Liberation Mono,monospace">52</div>
<svg width="7" height="8" viewBox="0 0 7 8" style="position:absolute;left:356px;top:619.4px"><path d="M0 0L7 4L0 8Z" fill="#5b6a80"/></svg>
<div style="position:absolute;left:16px;top:636px;width:347px;height:1px;background:#1a2536"></div>
<svg width="12" height="12" viewBox="0 0 12 12" style="position:absolute;left:18px;top:642px"><path d="M5.200 6a.9.9 0 0 1 1.800 0a1.900 1.900 0 0 1-3.800 0a3 3 0 0 1 6 0a4.100 4.100 0 0 1-8.200 0a5 5 0 0 1 8.500-3.500" stroke="#4f54f2" stroke-width="1.350" fill="none" stroke-linecap="round"/></svg>
<div style="position:absolute;left:40px;top:641.5px;line-height:14px;white-space:nowrap;font-size:12px;color:#e6ebf2;letter-spacing:-.12px;-webkit-text-stroke:.5px #e6ebf2">Tropical Cyclones</div>
<div style="position:absolute;right:59px;top:642.0px;line-height:14px;white-space:nowrap;font-size:9px;font-weight:700;color:#e03030;letter-spacing:-.2px">1 RED</div>
<div style="position:absolute;right:31.5px;top:642.0px;line-height:14px;white-space:nowrap;font-size:10px;color:#e03030;font-family:Liberation Mono,monospace">9</div>
<svg width="7" height="8" viewBox="0 0 7 8" style="position:absolute;left:356px;top:644.5px"><path d="M0 0L7 4L0 8Z" fill="#5b6a80"/></svg>
<div style="position:absolute;left:16px;top:661px;width:347px;height:1px;background:#1a2536"></div>
<div style="position:absolute;left:0;top:674px;width:380px;height:1px;background:#1a2536"></div>
<div class="ph" style="top:689.4px">RECENT ALERTS</div>
<div class="pr" style="top:688.9px;color:#4c5a70;font-family:Liberation Mono,monospace">0</div>
<div style="position:absolute;left:0;top:699px;width:380px;height:83px;background:#0d131f;border-top:1px solid #1a2536"></div>
<div class="ph" style="top:714.4px">RECENT VOYAGE SCORES</div>
<div class="pr" style="top:713.9px;color:#1a9cc2;font-size:10.5px">Open Scorer</div>
<div style="position:absolute;left:16px;top:740.2px;line-height:14px;white-space:nowrap;font-size:12px;color:#e6ebf2;letter-spacing:-.12px;-webkit-text-stroke:.5px #e6ebf2;letter-spacing:-.5px">IDJKT → JPTYO</div>
<div style="position:absolute;right:119px;top:740.7px;line-height:14px;white-space:nowrap;font-size:11.5px;font-weight:700;color:#7d88f2;font-family:Liberation Mono,monospace">35</div>
<div style="position:absolute;left:268px;top:739.2px;width:57px;height:16px;border-radius:3px;background:#171d36;color:#7d88f2;font-size:9px;font-weight:700;line-height:16px;text-align:center;letter-spacing:-.1px">MODERATE</div>
<div style="position:absolute;right:16px;top:740.7px;line-height:14px;white-space:nowrap;font-size:10px;color:#4c5a70">6d ago</div>
<div style="position:absolute;left:16px;top:765.2px;line-height:14px;white-space:nowrap;font-size:12px;color:#e6ebf2;letter-spacing:-.12px;-webkit-text-stroke:.5px #e6ebf2;letter-spacing:-.5px">IDJKT → USSDO</div>
<div style="position:absolute;right:119px;top:765.7px;line-height:14px;white-space:nowrap;font-size:11.5px;font-weight:700;color:#7d88f2;font-family:Liberation Mono,monospace">43</div>
<div style="position:absolute;left:268px;top:764.2px;width:57px;height:16px;border-radius:3px;background:#171d36;color:#7d88f2;font-size:9px;font-weight:700;line-height:16px;text-align:center;letter-spacing:-.1px">MODERATE</div>
<div style="position:absolute;right:16px;top:765.7px;line-height:14px;white-space:nowrap;font-size:10px;color:#4c5a70">6d ago</div>
<div style="position:absolute;left:16px;top:759px;width:347px;height:1px;background:#1a2536"></div>
</div>
</div></body></html>
